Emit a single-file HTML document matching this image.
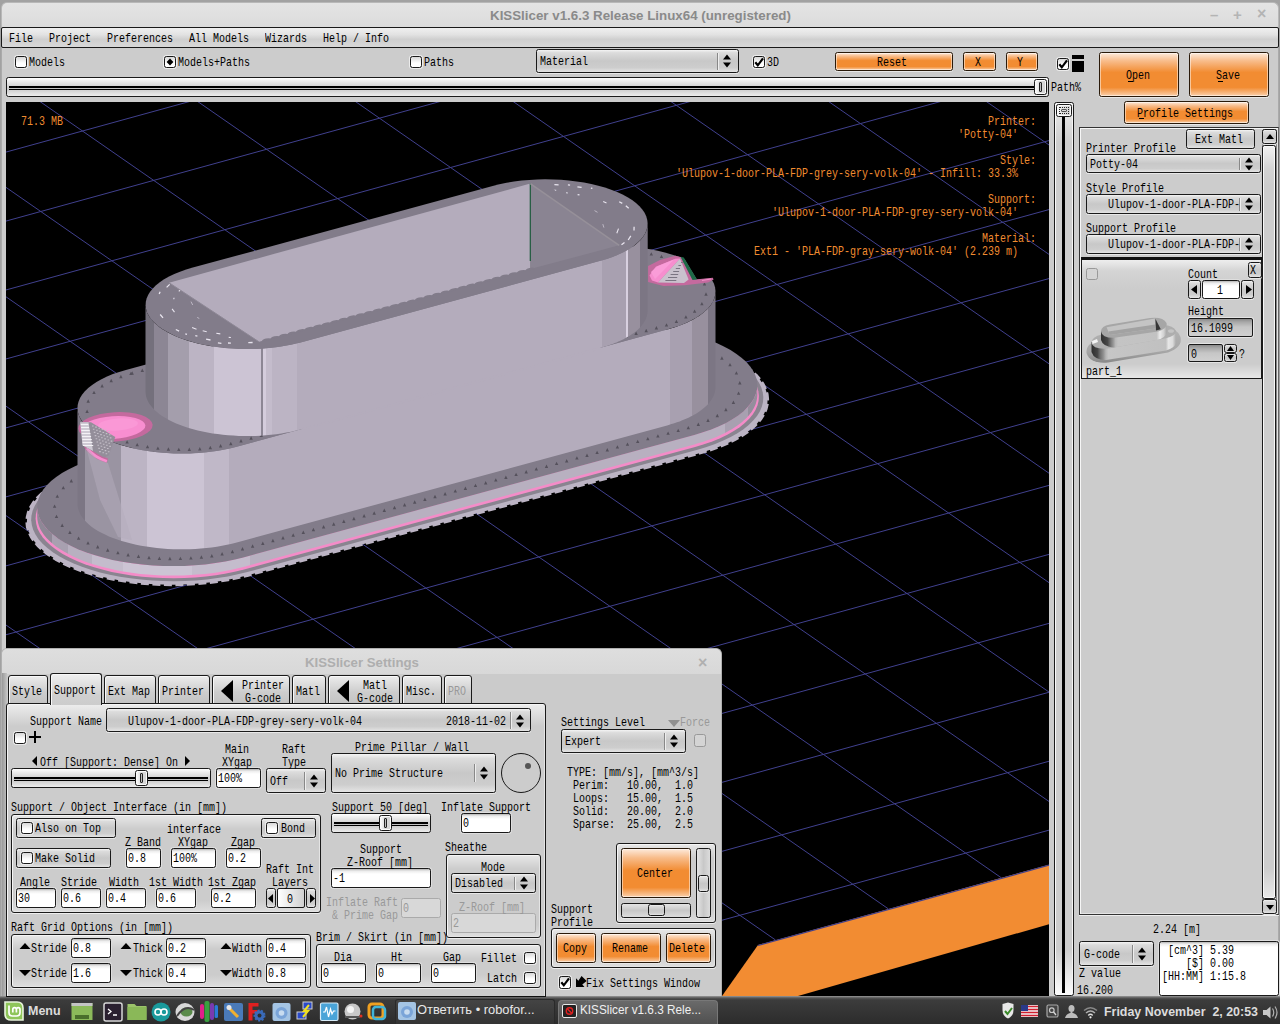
<!DOCTYPE html>
<html><head><meta charset="utf-8"><title>KISSlicer</title>
<style>
html,body{margin:0;padding:0;background:#000;overflow:hidden;}
#root{position:relative;width:1280px;height:1024px;overflow:hidden;background:#000;font-family:"Liberation Mono","DejaVu Sans Mono",monospace;}
#root div,#root span,#root svg.a,#root i{position:absolute;box-sizing:border-box;}
.t{z-index:5;font:13px/13px "Liberation Mono","DejaVu Sans Mono",monospace;white-space:pre;transform:scaleX(0.769);transform-origin:0 0;color:#000;}
.win{background:#ccc;}
.in{background:linear-gradient(#b4b4b4 0,#ececec 2px,#fff 5px);border:1px solid #1a1a1a;border-radius:2.5px;box-shadow:0 0 0 1px #dedede;}
.in.dis{background:#d8d8d8;border-color:#aaa;box-shadow:none;}
.b{border:1px solid #1a1a1a;border-radius:2.5px;background:linear-gradient(#f4f4f4 0%,#dcdcdc 12%,#c8c8c8 50%,#cdcdcd 80%,#e4e4e4 100%);box-shadow:0 1px 0 #e8e8e8;}
.o{border:1px solid #2a1a0a;border-radius:2.5px;background:linear-gradient(#fdeadb 0%,#f8bd8c 18%,#f28c32 45%,#f28c32 80%,#fad0ac 100%);box-shadow:0 1px 0 #e8e8e8,inset 0 0 0 1px rgba(255,255,255,.5);}
.sep{width:1px;background:#888;box-shadow:1px 0 0 #eee;}
.cb{background:linear-gradient(#d8d8d8,#fff 60%);border:1px solid #1a1a1a;border-radius:2.5px;box-shadow:0 0 0 1px #ececec;}
.cb.dis{background:#d4d4d4;border-color:#999;box-shadow:none;}
.grp{border:1px solid #1a1a1a;border-radius:3px;background:linear-gradient(#e8e8e8 0,#cccccc 14px,#cccccc calc(100% - 12px),#dedede 100%);box-shadow:0 1px 0 #eee,inset 1px 1px 0 #f6f6f6,inset -1px -1px 0 #e4e4e4;}
.sl{border:1px solid #1a1a1a;border-radius:2.5px;background:linear-gradient(#fff 0,#f4f4f4 2px,#d2d2d2 9px,#cfcfcf 12px,#ececec 100%);}
.trk{height:4px;background:linear-gradient(#000 0,#000 2px,#c4c4c4 2px,#c4c4c4 3px,#000 3px,#000 4px);}
.hd{border:1px solid #1a1a1a;border-radius:2.5px;background:linear-gradient(90deg,#fff,#e0e0e0 40%,#d0d0d0);box-shadow:inset 0 0 0 1px #fafafa;}
.hd i{position:absolute;left:4px;top:2px;bottom:2px;width:3px;border:1px solid #222;border-radius:1px;display:block;background:#bbb}
.card{border:1px solid #1a1a1a;border-top:0;background:linear-gradient(#f0f0f0 0,#d4d4d4 12px,#cccccc 30px,#cccccc calc(100% - 14px),#e8e8e8 100%);}
.ro{border:1px solid #1a1a1a;border-radius:2px;background:linear-gradient(#8a8a8a 0,#a8a8a8 3px,#c6c6c6 8px,#d0d0d0 100%);box-shadow:0 0 0 1px #e4e4e4;}
.tab{border:1px solid #1a1a1a;border-radius:3px 3px 0 0;background:linear-gradient(#ececec,#cdcdcd 60%,#c4c4c4);box-shadow:inset 1px 1px 0 #f8f8f8;}

</style></head>
<body>
<div id="root">
<div style="left:0;top:0;width:1280px;height:1024px;background:#a2a2a2"></div>
<div style="left:1px;top:2px;width:1278px;height:30px;background:linear-gradient(#e4e4e4,#dadada);border-radius:6px 6px 0 0;border:1px solid #b8b8b8;border-bottom:0"></div>
<span style="left:490.0px;top:7.0px;font:bold 13.3px/18px 'Liberation Sans','DejaVu Sans',sans-serif;color:#8a8a8a;white-space:pre;transform:scaleX(1.0029);transform-origin:0 0;">KISSlicer v1.6.3 Release Linux64 (unregistered)</span>
<div style="left:1205px;top:6px;width:70px;height:20px;font:bold 15px/18px 'Liberation Sans',sans-serif;color:#b4b4b4;white-space:pre"><span style="left:5px;top:0">–</span><span style="left:28px;top:0">+</span><span style="left:52px;top:-1px;font-size:16px">×</span></div>
<div class="win" style="left:1px;top:27px;width:1278px;height:970px;border-left:1px solid #aaa;border-right:1px solid #aaa"></div>
<div style="left:1px;top:27px;width:1278px;height:21px;border:1px solid #1a1a1a;border-radius:2px;background:linear-gradient(#f0f0f0 0,#e2e2e2 35%,#cfcfcf 60%,#d8d8d8 100%)"></div>
<span class="t " style="left:8.5px;top:32px;">File</span>
<span class="t " style="left:48.5px;top:32px;">Project</span>
<span class="t " style="left:106.5px;top:32px;">Preferences</span>
<span class="t " style="left:188.5px;top:32px;">All Models</span>
<span class="t " style="left:264.5px;top:32px;">Wizards</span>
<span class="t " style="left:322.5px;top:32px;">Help / Info</span>
<div class="cb" style="left:15.0px;top:56.0px;width:12.0px;height:12.0px;"></div>
<span class="t " style="left:28.5px;top:56px;">Models</span>
<div class="cb" style="left:164px;top:56px;width:12px;height:12px"><div style="left:2px;top:2px;width:6px;height:6px;background:#000;transform:rotate(45deg) scale(.8)"></div></div>
<span class="t " style="left:177.5px;top:56px;">Models+Paths</span>
<div class="cb" style="left:410.0px;top:56.0px;width:12.0px;height:12.0px;"></div>
<span class="t " style="left:423.5px;top:56px;">Paths</span>
<div class="b" style="left:536.0px;top:49.0px;width:203.0px;height:24.0px;"></div>
<div class="sep" style="left:717.0px;top:52.5px;height:17px"></div>
<svg class="a" style="left:722px;top:53.25px" width="10" height="16" viewBox="0 0 10 16"><path d="M5 1.5 L9 6.5 L1 6.5Z M5 14.5 L9 9.5 L1 9.5Z" fill="#000"/></svg>
<span class="t " style="left:539.5px;top:55px;">Material</span>
<div class="cb" style="left:753.0px;top:56.0px;width:12.0px;height:12.0px;"><svg width="12" height="12" viewBox="0 0 12 12" style="position:absolute;left:-1px;top:-1px"><path d="M2.300 6.200 L4.800 9.300 L10 2.300" fill="none" stroke="#000" stroke-width="2.200"/></svg></div>
<span class="t " style="left:766.5px;top:56px;">3D</span>
<div class="o" style="left:835.0px;top:52.0px;width:118.0px;height:19.0px;"></div>
<span class="t " style="left:877.2px;top:56px;">Reset</span>
<div class="o" style="left:963.0px;top:52.0px;width:33.0px;height:19.0px;"></div>
<span class="t " style="left:974.8px;top:56px;">X</span>
<div class="o" style="left:1006.0px;top:52.0px;width:32.0px;height:19.0px;"></div>
<span class="t " style="left:1017.2px;top:56px;">Y</span>
<div class="cb" style="left:1057.0px;top:58.0px;width:12.0px;height:12.0px;"><svg width="12" height="12" viewBox="0 0 12 12" style="position:absolute;left:-1px;top:-1px"><path d="M2.300 6.200 L4.800 9.300 L10 2.300" fill="none" stroke="#000" stroke-width="2.200"/></svg></div>
<div style="left:1072px;top:55px;width:12px;height:17px;background:#000"></div><div style="left:1072px;top:58.600px;width:12px;height:2.400px;background:#ccc"></div>
<div class="o" style="left:1099.0px;top:52.0px;width:80.0px;height:45.0px;"></div>
<span class="t " style="left:1125.5px;top:69px;">Open</span>
<div class="o" style="left:1189.0px;top:52.0px;width:80.0px;height:45.0px;"></div>
<span class="t " style="left:1215.5px;top:69px;">Save</span>
<div style="left:1127.5px;top:80.5px;width:5px;height:1px;background:#000"></div><div style="left:1217.5px;top:80.5px;width:5px;height:1px;background:#000"></div>
<div class="o" style="left:1124.0px;top:101.0px;width:125.0px;height:23.0px;"></div>
<span class="t " style="left:1137.0px;top:107px;">Profile Settings</span>
<div style="left:1138.5px;top:118px;width:5px;height:1px;background:#000"></div>
<div class="sl" style="left:6.0px;top:77.0px;width:1043.0px;height:20.0px;"></div>
<div class="trk" style="left:9px;top:86px;width:1037px"></div>
<div class="hd" style="left:1034px;top:79px;width:13px;height:16px"><i></i></div>
<span class="t " style="left:1050.5px;top:81px;">Path%</span>
<svg class="a" style="left:6px;top:102px" width="1043" height="894" viewBox="6 102 1043 894">
<rect x="6" y="102" width="1043" height="894" fill="#000"/>
<path d="M-1414.6 405.5L1520.8 -403.1M-1343.5 454.8L1592.0 -353.8M-1272.3 504.2L1663.1 -304.4M-1201.2 553.6L1734.3 -255.0M-1130.0 602.9L1805.4 -205.7M-1058.9 652.3L1876.6 -156.3M-987.7 701.6L1947.7 -107.0M-916.6 751.0L2018.9 -57.6M-845.4 800.4L2090.0 -8.2M-774.3 849.7L2161.2 41.1M-703.1 899.1L2232.3 90.5M-632.0 948.4L2303.5 139.8M-560.8 997.8L2374.6 189.2M-489.7 1047.2L2445.8 238.6M-418.5 1096.5L2516.9 287.9M-347.4 1145.9L2588.1 337.3M-276.2 1195.2L2659.2 386.6M-1444.0 275.7L-127.7 1188.8M-1331.1 244.6L-14.8 1157.7M-1218.2 213.5L98.1 1126.6M-1105.3 182.4L211.0 1095.5M-992.4 151.3L323.9 1064.4M-879.5 120.2L436.8 1033.3M-766.6 89.1L549.7 1002.2M-653.7 58.0L662.6 971.1M-540.8 26.9L775.5 940.0M-427.9 -4.2L888.4 908.9M-315.0 -35.3L1001.3 877.8M-202.1 -66.4L1114.2 846.7M-89.2 -97.5L1227.1 815.6M23.7 -128.6L1340.0 784.5M136.6 -159.7L1452.9 753.4M249.5 -190.8L1565.8 722.3M362.4 -221.9L1678.7 691.2M475.3 -253.0L1791.6 660.1M588.2 -284.1L1904.5 629.0M701.1 -315.2L2017.4 597.9M814.0 -346.3L2130.3 566.8M926.9 -377.4L2243.2 535.7M1039.8 -408.5L2356.1 504.6M1152.7 -439.6L2469.0 473.5" stroke="#40408e" stroke-width="1" fill="none"/>
<polygon points="758,945 1049,864.7 1049,924.2 798,996 722,996" fill="#f28c32"/>
<path d="M758 945.5L1049 865.2" stroke="#40408e" stroke-width="1.2"/>
<defs>
<linearGradient id="g1" gradientUnits="userSpaceOnUse" x1="36" y1="0" x2="766" y2="0"><stop offset="0.0000" stop-color="#8e8896"/><stop offset="0.0219" stop-color="#8e8896"/><stop offset="0.0219" stop-color="#a8a0b0"/><stop offset="0.0438" stop-color="#a8a0b0"/><stop offset="0.0438" stop-color="#b8b0c0"/><stop offset="0.0767" stop-color="#b8b0c0"/><stop offset="0.0767" stop-color="#c4bccc"/><stop offset="0.1192" stop-color="#c4bccc"/><stop offset="0.1192" stop-color="#ccc4d4"/><stop offset="0.2137" stop-color="#ccc4d4"/><stop offset="0.2137" stop-color="#c4bccc"/><stop offset="0.2932" stop-color="#c4bccc"/><stop offset="0.2932" stop-color="#b8b0c0"/><stop offset="0.8959" stop-color="#b8b0c0"/><stop offset="0.8959" stop-color="#b8b0c0"/><stop offset="0.9438" stop-color="#b8b0c0"/><stop offset="0.9438" stop-color="#a8a0b0"/><stop offset="0.9753" stop-color="#a8a0b0"/><stop offset="0.9753" stop-color="#948e9c"/><stop offset="1.0000" stop-color="#948e9c"/></linearGradient>
<linearGradient id="g2" gradientUnits="userSpaceOnUse" x1="77" y1="0" x2="716" y2="0"><stop offset="0.0000" stop-color="#7c7684"/><stop offset="0.0125" stop-color="#7c7684"/><stop offset="0.0125" stop-color="#9a94a2"/><stop offset="0.0689" stop-color="#9a94a2"/><stop offset="0.0689" stop-color="#bcb4c4"/><stop offset="0.1088" stop-color="#bcb4c4"/><stop offset="0.1088" stop-color="#ccc4d4"/><stop offset="0.1994" stop-color="#ccc4d4"/><stop offset="0.1994" stop-color="#c0b8c8"/><stop offset="0.2385" stop-color="#c0b8c8"/><stop offset="0.2385" stop-color="#b4acbc"/><stop offset="0.9280" stop-color="#b4acbc"/><stop offset="0.9280" stop-color="#b4acbc"/><stop offset="0.9280" stop-color="#b4acbc"/><stop offset="0.9280" stop-color="#a8a0b0"/><stop offset="0.9632" stop-color="#a8a0b0"/><stop offset="0.9632" stop-color="#98909e"/><stop offset="0.9875" stop-color="#98909e"/><stop offset="0.9875" stop-color="#7c7684"/><stop offset="1.0000" stop-color="#7c7684"/></linearGradient>
<linearGradient id="g3" gradientUnits="userSpaceOnUse" x1="145" y1="0" x2="648" y2="0"><stop offset="0.0000" stop-color="#74707c"/><stop offset="0.0171" stop-color="#74707c"/><stop offset="0.0171" stop-color="#8c8694"/><stop offset="0.0451" stop-color="#8c8694"/><stop offset="0.0451" stop-color="#a49eac"/><stop offset="0.0869" stop-color="#a49eac"/><stop offset="0.0869" stop-color="#bcb4c4"/><stop offset="0.1366" stop-color="#bcb4c4"/><stop offset="0.1366" stop-color="#ccc4d4"/><stop offset="0.2316" stop-color="#ccc4d4"/><stop offset="0.2316" stop-color="#8c8694"/><stop offset="0.2346" stop-color="#8c8694"/><stop offset="0.2346" stop-color="#d4ccdc"/><stop offset="0.2406" stop-color="#d4ccdc"/><stop offset="0.2406" stop-color="#c4bccc"/><stop offset="0.2531" stop-color="#c4bccc"/><stop offset="0.2531" stop-color="#bcb4c4"/><stop offset="0.3028" stop-color="#bcb4c4"/><stop offset="0.3028" stop-color="#b4acbc"/><stop offset="0.9095" stop-color="#b4acbc"/><stop offset="0.9095" stop-color="#a8a0b0"/><stop offset="0.9569" stop-color="#a8a0b0"/><stop offset="0.9569" stop-color="#d8d0e0"/><stop offset="0.9606" stop-color="#d8d0e0"/><stop offset="0.9606" stop-color="#98909e"/><stop offset="0.9841" stop-color="#98909e"/><stop offset="0.9841" stop-color="#7c7684"/><stop offset="1.0000" stop-color="#7c7684"/></linearGradient>
</defs>
<polygon points="94.2,468.4 84.9,471.2 76.1,474.3 67.9,477.6 60.3,481.3 53.4,485.2 47.2,489.3 41.8,493.6 37.2,498.1 33.4,502.8 30.4,507.5 28.4,512.4 27.2,517.3 26.9,522.2 27.4,527.1 28.9,532.0 31.3,536.9 34.5,541.6 38.5,546.2 43.4,550.7 49.1,555.0 55.5,559.1 62.6,563.0 70.4,566.6 78.8,569.9 87.8,572.9 97.3,575.6 107.3,578.0 117.6,580.0 128.3,581.7 139.3,583.0 150.4,584.0 161.7,584.5 173.0,584.7 184.3,584.4 195.6,583.8 206.7,582.8 217.5,581.5 228.1,579.7 238.3,577.6 248.2,575.2 700.3,452.9 709.6,450.1 718.4,447.0 726.6,443.7 734.2,440.0 741.1,436.1 747.3,432.0 752.7,427.7 757.3,423.2 761.1,418.5 764.1,413.8 766.1,408.9 767.3,404.0 767.6,399.1 767.1,394.2 765.6,389.3 763.2,384.4 760.0,379.7 756.0,375.1 751.1,370.6 745.4,366.3 739.0,362.2 731.9,358.3 724.1,354.7 715.7,351.4 706.7,348.4 697.2,345.7 687.2,343.3 676.9,341.3 666.2,339.6 655.2,338.3 644.1,337.3 632.8,336.8 621.5,336.6 610.2,336.9 598.9,337.5 587.8,338.5 577.0,339.8 566.4,341.6 556.2,343.7 546.3,346.1" fill="#bcb4c4" stroke="#bcb4c4" stroke-width="3" stroke-dasharray="8 3.5" stroke-linejoin="round"/>
<polygon points="97.0,467.6 87.9,470.3 79.3,473.4 71.2,476.7 63.8,480.2 57.1,484.0 51.0,488.1 45.8,492.3 41.3,496.7 37.5,501.2 34.7,505.9 32.7,510.6 31.5,515.4 31.2,520.2 31.8,525.0 33.2,529.8 35.5,534.5 38.6,539.2 42.6,543.7 47.4,548.0 52.9,552.2 59.2,556.2 66.1,560.0 73.7,563.5 82.0,566.8 90.8,569.7 100.0,572.4 109.8,574.7 119.9,576.7 130.3,578.3 141.0,579.6 151.9,580.5 162.9,581.1 174.0,581.2 185.0,581.0 196.0,580.4 206.8,579.4 217.5,578.1 227.8,576.4 237.8,574.3 247.4,572.0 697.5,449.7 706.6,447.0 715.2,443.9 723.3,440.6 730.7,437.1 737.4,433.3 743.5,429.2 748.7,425.0 753.2,420.6 757.0,416.1 759.8,411.4 761.8,406.7 763.0,401.9 763.3,397.1 762.7,392.3 761.3,387.5 759.0,382.8 755.9,378.1 751.9,373.6 747.1,369.3 741.6,365.1 735.3,361.1 728.4,357.3 720.8,353.8 712.5,350.5 703.7,347.6 694.5,344.9 684.7,342.6 674.6,340.6 664.2,339.0 653.5,337.7 642.6,336.8 631.6,336.2 620.5,336.1 609.5,336.3 598.5,336.9 587.7,337.9 577.0,339.2 566.7,340.9 556.7,343.0 547.1,345.3" fill="#8a8490" />
<polygon points="99.4,468.2 90.5,470.8 82.2,473.7 74.4,476.9 67.2,480.4 60.7,484.0 54.8,487.9 49.7,492.0 45.3,496.3 41.8,500.7 39.0,505.2 37.0,509.8 35.9,514.4 35.6,519.1 36.2,523.8 37.5,528.4 39.8,533.0 42.8,537.5 46.7,541.8 51.3,546.1 56.6,550.1 62.7,554.0 69.4,557.6 76.8,561.1 84.8,564.2 93.3,567.1 102.3,569.6 111.7,571.9 121.5,573.8 131.6,575.4 142.0,576.7 152.5,577.5 163.2,578.1 173.9,578.2 184.6,578.0 195.3,577.4 205.8,576.5 216.0,575.2 226.1,573.5 235.7,571.5 245.0,569.2 695.1,446.9 704.0,444.3 712.3,441.4 720.1,438.2 727.3,434.7 733.8,431.1 739.7,427.2 744.8,423.1 749.2,418.8 752.7,414.4 755.5,409.9 757.5,405.3 758.6,400.7 758.9,396.0 758.3,391.3 757.0,386.7 754.7,382.1 751.7,377.6 747.8,373.3 743.2,369.0 737.9,365.0 731.8,361.1 725.1,357.5 717.7,354.0 709.7,350.9 701.2,348.0 692.2,345.5 682.8,343.2 673.0,341.3 662.9,339.7 652.5,338.4 642.0,337.6 631.3,337.0 620.6,336.9 609.9,337.1 599.2,337.7 588.7,338.6 578.5,339.9 568.4,341.6 558.8,343.6 549.5,345.9" fill="#f48cc8" />
<polygon points="37.2,507.0 37.4,510.1 38.0,513.2 38.9,516.3 40.2,519.4 42.0,522.5 44.0,525.5 46.5,528.4 49.3,531.3 52.4,534.1 55.9,536.9 59.8,539.6 63.9,542.1 68.4,544.6 73.1,547.0 78.1,549.2 83.4,551.4 89.0,553.4 94.8,555.3 100.8,557.0 107.0,558.6 113.4,560.1 119.9,561.4 126.6,562.5 133.5,563.5 140.4,564.4 147.5,565.0 154.6,565.6 161.7,565.9 168.9,566.1 176.1,566.1 183.3,565.9 190.5,565.6 197.6,565.1 204.6,564.5 211.5,563.7 218.4,562.7 225.1,561.5 231.6,560.3 238.0,558.8 244.2,557.2 694.3,434.9 697.1,434.1 699.9,433.3 702.7,432.4 705.4,431.6 708.1,430.6 710.7,429.7 713.2,428.7 715.7,427.7 718.1,426.7 720.5,425.6 722.8,424.5 725.0,423.4 727.2,422.3 729.3,421.1 731.4,419.9 733.3,418.7 735.2,417.5 737.1,416.3 738.8,415.0 740.5,413.7 742.1,412.4 743.6,411.1 745.1,409.8 746.5,408.4 747.8,407.0 749.0,405.7 750.1,404.3 751.2,402.9 752.2,401.4 753.0,400.0 753.9,398.6 754.6,397.1 755.2,395.7 755.8,394.2 756.2,392.7 756.6,391.3 756.9,389.8 757.1,388.3 757.3,386.8 757.3,385.3 757.3,394.8 757.3,396.3 757.1,397.8 756.9,399.3 756.6,400.8 756.2,402.2 755.8,403.7 755.2,405.2 754.6,406.6 753.9,408.1 753.0,409.5 752.2,410.9 751.2,412.4 750.1,413.8 749.0,415.2 747.8,416.5 746.5,417.9 745.1,419.3 743.6,420.6 742.1,421.9 740.5,423.2 738.8,424.5 737.1,425.8 735.2,427.0 733.3,428.2 731.4,429.4 729.3,430.6 727.2,431.8 725.0,432.9 722.8,434.0 720.5,435.1 718.1,436.2 715.7,437.2 713.2,438.2 710.7,439.2 708.1,440.1 705.4,441.1 702.7,441.9 699.9,442.8 697.1,443.6 694.3,444.4 244.2,566.7 238.0,568.3 231.6,569.8 225.1,571.0 218.4,572.2 211.5,573.2 204.6,574.0 197.6,574.6 190.5,575.1 183.3,575.4 176.1,575.6 168.9,575.6 161.7,575.4 154.6,575.1 147.5,574.5 140.4,573.9 133.5,573.0 126.6,572.0 119.9,570.9 113.4,569.6 107.0,568.1 100.8,566.5 94.8,564.8 89.0,562.9 83.4,560.9 78.1,558.7 73.1,556.5 68.4,554.1 63.9,551.6 59.8,549.1 55.9,546.4 52.4,543.6 49.3,540.8 46.5,537.9 44.0,535.0 42.0,532.0 40.2,528.9 38.9,525.8 38.0,522.7 37.4,519.6 37.2,516.5" fill="url(#g1)" />
<polygon points="100.2,457.4 91.5,460.0 83.2,462.8 75.5,466.0 68.4,469.4 62.0,473.0 56.2,476.9 51.1,480.9 46.8,485.2 43.3,489.5 40.5,494.0 38.6,498.5 37.5,503.1 37.2,507.7 37.7,512.3 39.1,516.9 41.3,521.4 44.3,525.8 48.1,530.2 52.7,534.3 58.0,538.4 64.0,542.2 70.6,545.8 77.9,549.2 85.8,552.3 94.2,555.1 103.1,557.6 112.4,559.9 122.1,561.8 132.1,563.3 142.3,564.6 152.8,565.4 163.3,566.0 173.9,566.1 184.5,565.9 195.0,565.3 205.4,564.4 215.5,563.1 225.4,561.5 235.0,559.5 244.2,557.2 694.3,434.9 703.0,432.3 711.3,429.5 719.0,426.3 726.1,422.9 732.5,419.3 738.3,415.4 743.4,411.4 747.7,407.1 751.2,402.8 754.0,398.3 755.9,393.8 757.0,389.2 757.3,384.6 756.8,380.0 755.4,375.4 753.2,370.9 750.2,366.5 746.4,362.1 741.8,358.0 736.5,353.9 730.5,350.1 723.9,346.5 716.6,343.1 708.7,340.0 700.3,337.2 691.4,334.7 682.1,332.4 672.4,330.5 662.4,329.0 652.2,327.7 641.7,326.9 631.2,326.3 620.6,326.2 610.0,326.4 599.5,327.0 589.1,327.9 579.0,329.2 569.1,330.8 559.5,332.8 550.3,335.1" fill="#827c8a" />
<path d="M109.5 462.1l1.7 3.4h-3.4zM99.4 465.2l1.7 3.4h-3.4zM89.6 468.9l1.7 3.4h-3.4zM80.2 473.4l1.7 3.4h-3.4zM71.3 479.0l1.7 3.4h-3.4zM63.3 485.9l1.7 3.4h-3.4zM57.3 494.4l1.7 3.4h-3.4zM54.6 504.4l1.7 3.4h-3.4zM56.5 514.7l1.7 3.4h-3.4zM62.2 523.5l1.7 3.4h-3.4zM69.9 530.6l1.7 3.4h-3.4zM78.6 536.4l1.7 3.4h-3.4zM88.0 541.2l1.7 3.4h-3.4zM97.7 545.1l1.7 3.4h-3.4zM107.7 548.3l1.7 3.4h-3.4zM117.9 550.9l1.7 3.4h-3.4zM128.1 553.0l1.7 3.4h-3.4zM138.5 554.6l1.7 3.4h-3.4zM149.0 555.8l1.7 3.4h-3.4zM159.4 556.5l1.7 3.4h-3.4zM169.9 556.8l1.7 3.4h-3.4zM180.4 556.7l1.7 3.4h-3.4zM190.9 556.2l1.7 3.4h-3.4zM201.4 555.3l1.7 3.4h-3.4zM211.8 554.0l1.7 3.4h-3.4zM222.1 552.1l1.7 3.4h-3.4zM232.4 549.8l1.7 3.4h-3.4zM242.5 547.1l1.7 3.4h-3.4zM252.6 544.3l1.7 3.4h-3.4zM262.8 541.6l1.7 3.4h-3.4zM272.9 538.8l1.7 3.4h-3.4zM283.0 536.1l1.7 3.4h-3.4zM293.2 533.3l1.7 3.4h-3.4zM303.3 530.5l1.7 3.4h-3.4zM313.4 527.8l1.7 3.4h-3.4zM323.6 525.0l1.7 3.4h-3.4zM333.7 522.3l1.7 3.4h-3.4zM343.8 519.5l1.7 3.4h-3.4zM353.9 516.8l1.7 3.4h-3.4zM364.1 514.0l1.7 3.4h-3.4zM374.2 511.3l1.7 3.4h-3.4zM384.3 508.5l1.7 3.4h-3.4zM394.5 505.8l1.7 3.4h-3.4zM404.6 503.0l1.7 3.4h-3.4zM414.7 500.3l1.7 3.4h-3.4zM424.9 497.5l1.7 3.4h-3.4zM435.0 494.8l1.7 3.4h-3.4zM445.1 492.0l1.7 3.4h-3.4zM455.3 489.2l1.7 3.4h-3.4zM465.4 486.5l1.7 3.4h-3.4zM475.5 483.7l1.7 3.4h-3.4zM485.7 481.0l1.7 3.4h-3.4zM495.8 478.2l1.7 3.4h-3.4zM505.9 475.5l1.7 3.4h-3.4zM516.1 472.7l1.7 3.4h-3.4zM526.2 470.0l1.7 3.4h-3.4zM536.3 467.2l1.7 3.4h-3.4zM546.5 464.5l1.7 3.4h-3.4zM556.6 461.7l1.7 3.4h-3.4zM566.7 459.0l1.7 3.4h-3.4zM576.9 456.2l1.7 3.4h-3.4zM587.0 453.5l1.7 3.4h-3.4zM597.1 450.7l1.7 3.4h-3.4zM607.3 448.0l1.7 3.4h-3.4zM617.4 445.2l1.7 3.4h-3.4zM627.5 442.4l1.7 3.4h-3.4zM637.7 439.7l1.7 3.4h-3.4zM647.8 436.9l1.7 3.4h-3.4zM657.9 434.2l1.7 3.4h-3.4zM668.1 431.4l1.7 3.4h-3.4zM678.2 428.7l1.7 3.4h-3.4zM688.3 425.9l1.7 3.4h-3.4zM698.3 422.6l1.7 3.4h-3.4zM708.0 418.6l1.7 3.4h-3.4zM717.3 413.8l1.7 3.4h-3.4zM725.9 407.8l1.7 3.4h-3.4zM733.4 400.5l1.7 3.4h-3.4zM738.6 391.4l1.7 3.4h-3.4zM739.8 381.0l1.7 3.4h-3.4zM736.4 371.2l1.7 3.4h-3.4zM730.0 362.9l1.7 3.4h-3.4zM721.9 356.3l1.7 3.4h-3.4zM712.9 350.9l1.7 3.4h-3.4zM703.4 346.4l1.7 3.4h-3.4zM693.6 342.7l1.7 3.4h-3.4zM683.5 339.7l1.7 3.4h-3.4zM673.3 337.3l1.7 3.4h-3.4zM663.0 335.3l1.7 3.4h-3.4zM652.6 333.9l1.7 3.4h-3.4zM642.1 332.8l1.7 3.4h-3.4zM631.7 332.2l1.7 3.4h-3.4zM621.2 332.1l1.7 3.4h-3.4zM610.7 332.3l1.7 3.4h-3.4zM600.2 332.9l1.7 3.4h-3.4zM589.7 334.0l1.7 3.4h-3.4zM579.4 335.5l1.7 3.4h-3.4zM569.0 337.5l1.7 3.4h-3.4zM558.8 340.0l1.7 3.4h-3.4zM548.7 342.7l1.7 3.4h-3.4zM538.6 345.5l1.7 3.4h-3.4zM528.5 348.2l1.7 3.4h-3.4zM518.3 351.0l1.7 3.4h-3.4zM508.2 353.7l1.7 3.4h-3.4zM498.1 356.5l1.7 3.4h-3.4zM487.9 359.2l1.7 3.4h-3.4zM477.8 362.0l1.7 3.4h-3.4zM467.7 364.8l1.7 3.4h-3.4zM457.5 367.5l1.7 3.4h-3.4zM447.4 370.3l1.7 3.4h-3.4zM437.3 373.0l1.7 3.4h-3.4zM427.1 375.8l1.7 3.4h-3.4zM417.0 378.5l1.7 3.4h-3.4zM406.9 381.3l1.7 3.4h-3.4zM396.7 384.0l1.7 3.4h-3.4zM386.6 386.8l1.7 3.4h-3.4zM376.5 389.5l1.7 3.4h-3.4zM366.3 392.3l1.7 3.4h-3.4zM356.2 395.0l1.7 3.4h-3.4zM346.1 397.8l1.7 3.4h-3.4zM335.9 400.5l1.7 3.4h-3.4zM325.8 403.3l1.7 3.4h-3.4zM315.7 406.1l1.7 3.4h-3.4zM305.5 408.8l1.7 3.4h-3.4zM295.4 411.6l1.7 3.4h-3.4zM285.3 414.3l1.7 3.4h-3.4zM275.1 417.1l1.7 3.4h-3.4zM265.0 419.8l1.7 3.4h-3.4zM254.9 422.6l1.7 3.4h-3.4zM244.7 425.3l1.7 3.4h-3.4zM234.6 428.1l1.7 3.4h-3.4zM224.5 430.8l1.7 3.4h-3.4zM214.3 433.6l1.7 3.4h-3.4zM204.2 436.3l1.7 3.4h-3.4zM194.1 439.1l1.7 3.4h-3.4zM183.9 441.8l1.7 3.4h-3.4zM173.8 444.6l1.7 3.4h-3.4zM163.7 447.3l1.7 3.4h-3.4zM153.5 450.1l1.7 3.4h-3.4zM143.4 452.9l1.7 3.4h-3.4zM133.3 455.6l1.7 3.4h-3.4zM123.1 458.4l1.7 3.4h-3.4zM113.0 461.1l1.7 3.4h-3.4z" fill="#55515c"/>
<polygon points="77.5,408.0 77.6,410.4 78.1,412.8 78.8,415.2 79.8,417.6 81.1,420.0 82.7,422.3 84.6,424.5 86.8,426.8 89.2,428.9 91.9,431.1 94.8,433.1 98.0,435.1 101.4,437.0 105.1,438.8 109.0,440.6 113.0,442.2 117.3,443.7 121.7,445.2 126.4,446.5 131.1,447.8 136.1,448.9 141.1,449.9 146.3,450.8 151.5,451.5 156.9,452.2 162.3,452.7 167.7,453.1 173.3,453.4 178.8,453.5 184.3,453.5 189.8,453.4 195.3,453.1 200.8,452.8 206.2,452.3 211.6,451.6 216.8,450.9 222.0,450.0 227.0,449.0 231.9,447.9 236.7,446.7 667.1,329.6 669.3,329.0 671.4,328.3 673.5,327.7 675.6,327.0 677.7,326.3 679.7,325.6 681.6,324.8 683.5,324.0 685.4,323.2 687.2,322.4 689.0,321.6 690.7,320.7 692.4,319.9 694.0,319.0 695.6,318.1 697.1,317.1 698.6,316.2 700.0,315.2 701.3,314.3 702.6,313.3 703.8,312.3 705.0,311.3 706.1,310.2 707.2,309.2 708.2,308.1 709.1,307.1 710.0,306.0 710.8,304.9 711.6,303.8 712.2,302.7 712.9,301.6 713.4,300.5 713.9,299.4 714.3,298.3 714.7,297.2 715.0,296.0 715.2,294.9 715.4,293.7 715.5,292.6 715.5,291.5 715.5,387.3 715.5,388.4 715.4,389.5 715.2,390.7 715.0,391.8 714.7,393.0 714.3,394.1 713.9,395.2 713.4,396.3 712.9,397.4 712.2,398.5 711.6,399.6 710.8,400.7 710.0,401.8 709.1,402.9 708.2,403.9 707.2,405.0 706.1,406.0 705.0,407.1 703.8,408.1 702.6,409.1 701.3,410.1 700.0,411.0 698.6,412.0 697.1,412.9 695.6,413.9 694.0,414.8 692.4,415.7 690.7,416.5 689.0,417.4 687.2,418.2 685.4,419.0 683.5,419.8 681.6,420.6 679.7,421.4 677.7,422.1 675.6,422.8 673.5,423.5 671.4,424.1 669.3,424.8 667.1,425.4 236.7,542.5 231.9,543.7 227.0,544.8 222.0,545.8 216.8,546.7 211.6,547.4 206.2,548.1 200.8,548.6 195.3,548.9 189.8,549.2 184.3,549.3 178.8,549.3 173.3,549.2 167.7,548.9 162.3,548.5 156.9,548.0 151.5,547.3 146.3,546.6 141.1,545.7 136.1,544.7 131.1,543.6 126.4,542.3 121.7,541.0 117.3,539.5 113.0,538.0 109.0,536.4 105.1,534.6 101.4,532.8 98.0,530.9 94.8,528.9 91.9,526.9 89.2,524.7 86.8,522.6 84.6,520.3 82.7,518.1 81.1,515.8 79.8,513.4 78.8,511.0 78.1,508.6 77.6,506.2 77.5,503.8" fill="url(#g2)" />
<polygon points="125.9,369.9 119.2,371.9 112.9,374.1 107.0,376.5 101.5,379.2 96.5,382.0 92.1,384.9 88.2,388.0 84.9,391.3 82.2,394.6 80.0,398.0 78.6,401.5 77.7,405.1 77.5,408.6 77.9,412.1 79.0,415.7 80.7,419.1 83.0,422.6 85.9,425.9 89.4,429.1 93.5,432.2 98.1,435.1 103.2,437.9 108.8,440.5 114.9,442.9 121.3,445.1 128.2,447.0 135.3,448.7 142.8,450.2 150.5,451.4 158.3,452.3 166.3,453.0 174.5,453.4 182.6,453.5 190.7,453.4 198.8,452.9 206.8,452.2 214.6,451.2 222.2,450.0 229.6,448.5 236.7,446.7 667.1,329.6 673.8,327.6 680.1,325.4 686.0,323.0 691.5,320.3 696.5,317.5 700.9,314.6 704.8,311.5 708.1,308.2 710.8,304.9 713.0,301.5 714.4,298.0 715.3,294.4 715.5,290.9 715.1,287.4 714.0,283.8 712.3,280.4 710.0,276.9 707.1,273.6 703.6,270.4 699.5,267.3 694.9,264.4 689.8,261.6 684.2,259.0 678.1,256.6 671.7,254.4 664.8,252.5 657.7,250.8 650.2,249.3 642.5,248.1 634.7,247.2 626.7,246.5 618.5,246.1 610.4,246.0 602.3,246.1 594.2,246.6 586.2,247.3 578.4,248.3 570.8,249.5 563.4,251.0 556.3,252.8" fill="#827c8a" />
<path d="M130.9 371.7l1.7 3.4h-3.4zM120.9 374.8l1.7 3.4h-3.4zM111.2 378.8l1.7 3.4h-3.4zM102.1 384.0l1.7 3.4h-3.4zM94.0 390.7l1.7 3.4h-3.4zM88.2 399.3l1.7 3.4h-3.4zM87.1 409.6l1.7 3.4h-3.4zM91.5 419.1l1.7 3.4h-3.4zM98.9 426.5l1.7 3.4h-3.4zM107.7 432.2l1.7 3.4h-3.4zM117.2 436.6l1.7 3.4h-3.4zM127.1 440.2l1.7 3.4h-3.4zM137.2 442.9l1.7 3.4h-3.4zM147.5 444.9l1.7 3.4h-3.4zM157.9 446.4l1.7 3.4h-3.4zM168.4 447.3l1.7 3.4h-3.4zM178.8 447.7l1.7 3.4h-3.4zM189.3 447.6l1.7 3.4h-3.4zM199.8 447.0l1.7 3.4h-3.4zM210.3 445.8l1.7 3.4h-3.4zM220.6 444.1l1.7 3.4h-3.4zM230.8 441.8l1.7 3.4h-3.4zM241.0 439.0l1.7 3.4h-3.4zM251.1 436.3l1.7 3.4h-3.4zM261.2 433.5l1.7 3.4h-3.4zM271.4 430.7l1.7 3.4h-3.4zM281.5 428.0l1.7 3.4h-3.4zM291.6 425.2l1.7 3.4h-3.4zM301.8 422.5l1.7 3.4h-3.4zM311.9 419.7l1.7 3.4h-3.4zM322.0 417.0l1.7 3.4h-3.4zM332.2 414.2l1.7 3.4h-3.4zM342.3 411.5l1.7 3.4h-3.4zM352.4 408.7l1.7 3.4h-3.4zM362.6 405.9l1.7 3.4h-3.4zM372.7 403.2l1.7 3.4h-3.4zM382.8 400.4l1.7 3.4h-3.4zM393.0 397.7l1.7 3.4h-3.4zM403.1 394.9l1.7 3.4h-3.4zM413.2 392.2l1.7 3.4h-3.4zM423.3 389.4l1.7 3.4h-3.4zM433.5 386.6l1.7 3.4h-3.4zM443.6 383.9l1.7 3.4h-3.4zM453.7 381.1l1.7 3.4h-3.4zM463.9 378.4l1.7 3.4h-3.4zM474.0 375.6l1.7 3.4h-3.4zM484.1 372.9l1.7 3.4h-3.4zM494.3 370.1l1.7 3.4h-3.4zM504.4 367.3l1.7 3.4h-3.4zM514.5 364.6l1.7 3.4h-3.4zM524.7 361.8l1.7 3.4h-3.4zM534.8 359.1l1.7 3.4h-3.4zM544.9 356.3l1.7 3.4h-3.4zM555.1 353.6l1.7 3.4h-3.4zM565.2 350.8l1.7 3.4h-3.4zM575.3 348.0l1.7 3.4h-3.4zM585.5 345.3l1.7 3.4h-3.4zM595.6 342.5l1.7 3.4h-3.4zM605.7 339.8l1.7 3.4h-3.4zM615.8 337.0l1.7 3.4h-3.4zM626.0 334.3l1.7 3.4h-3.4zM636.1 331.5l1.7 3.4h-3.4zM646.2 328.8l1.7 3.4h-3.4zM656.4 326.0l1.7 3.4h-3.4zM666.5 323.2l1.7 3.4h-3.4zM676.4 319.7l1.7 3.4h-3.4zM685.9 315.2l1.7 3.4h-3.4zM694.6 309.4l1.7 3.4h-3.4zM701.9 301.9l1.7 3.4h-3.4zM706.0 292.3l1.7 3.4h-3.4zM704.5 282.1l1.7 3.4h-3.4zM698.6 273.5l1.7 3.4h-3.4zM690.4 266.9l1.7 3.4h-3.4zM681.2 261.8l1.7 3.4h-3.4zM671.5 257.8l1.7 3.4h-3.4zM661.5 254.7l1.7 3.4h-3.4zM651.3 252.2l1.7 3.4h-3.4zM641.0 250.5l1.7 3.4h-3.4zM630.5 249.2l1.7 3.4h-3.4zM620.1 248.5l1.7 3.4h-3.4zM609.6 248.4l1.7 3.4h-3.4zM599.1 248.7l1.7 3.4h-3.4zM588.6 249.5l1.7 3.4h-3.4zM578.2 250.9l1.7 3.4h-3.4zM567.9 252.9l1.7 3.4h-3.4zM557.7 255.5l1.7 3.4h-3.4zM547.6 258.3l1.7 3.4h-3.4zM537.5 261.0l1.7 3.4h-3.4zM527.3 263.8l1.7 3.4h-3.4zM517.2 266.6l1.7 3.4h-3.4zM507.1 269.3l1.7 3.4h-3.4zM496.9 272.1l1.7 3.4h-3.4zM486.8 274.8l1.7 3.4h-3.4zM476.7 277.6l1.7 3.4h-3.4zM466.5 280.3l1.7 3.4h-3.4zM456.4 283.1l1.7 3.4h-3.4zM446.3 285.9l1.7 3.4h-3.4zM436.1 288.6l1.7 3.4h-3.4zM426.0 291.4l1.7 3.4h-3.4zM415.9 294.1l1.7 3.4h-3.4zM405.7 296.9l1.7 3.4h-3.4zM395.6 299.6l1.7 3.4h-3.4zM385.5 302.4l1.7 3.4h-3.4zM375.4 305.2l1.7 3.4h-3.4zM365.2 307.9l1.7 3.4h-3.4zM355.1 310.7l1.7 3.4h-3.4zM345.0 313.4l1.7 3.4h-3.4zM334.8 316.2l1.7 3.4h-3.4zM324.7 318.9l1.7 3.4h-3.4zM314.6 321.7l1.7 3.4h-3.4zM304.4 324.4l1.7 3.4h-3.4zM294.3 327.2l1.7 3.4h-3.4zM284.2 330.0l1.7 3.4h-3.4zM274.0 332.7l1.7 3.4h-3.4zM263.9 335.5l1.7 3.4h-3.4zM253.8 338.2l1.7 3.4h-3.4zM243.6 341.0l1.7 3.4h-3.4zM233.5 343.7l1.7 3.4h-3.4zM223.4 346.5l1.7 3.4h-3.4zM213.2 349.3l1.7 3.4h-3.4zM203.1 352.0l1.7 3.4h-3.4zM193.0 354.8l1.7 3.4h-3.4zM182.8 357.5l1.7 3.4h-3.4zM172.7 360.3l1.7 3.4h-3.4zM162.6 363.0l1.7 3.4h-3.4zM152.5 365.8l1.7 3.4h-3.4zM142.3 368.6l1.7 3.4h-3.4zM132.2 371.3l1.7 3.4h-3.4z" fill="#55515c"/>
<polygon points="145.5,304.7 145.7,307.1 146.1,309.4 146.8,311.8 147.8,314.1 149.1,316.4 150.7,318.6 152.5,320.8 154.6,323.0 157.0,325.1 159.6,327.2 162.5,329.2 165.6,331.1 168.9,333.0 172.5,334.7 176.2,336.4 180.2,338.0 184.3,339.5 188.7,340.9 193.2,342.2 197.8,343.5 202.6,344.5 207.5,345.5 212.6,346.4 217.7,347.1 222.9,347.8 228.2,348.3 233.5,348.6 238.9,348.9 244.2,349.0 249.6,349.0 255.0,348.9 260.4,348.7 265.7,348.3 271.0,347.8 276.2,347.2 281.3,346.5 286.3,345.6 291.2,344.7 296.0,343.6 300.6,342.4 600.4,260.8 602.6,260.2 604.7,259.6 606.7,258.9 608.8,258.3 610.8,257.6 612.7,256.9 614.6,256.1 616.5,255.4 618.3,254.6 620.1,253.8 621.8,253.0 623.5,252.2 625.1,251.3 626.7,250.5 628.2,249.6 629.7,248.7 631.1,247.8 632.5,246.8 633.8,245.9 635.1,244.9 636.3,243.9 637.4,243.0 638.5,241.9 639.5,240.9 640.5,239.9 641.4,238.9 642.3,237.8 643.1,236.8 643.8,235.7 644.5,234.6 645.1,233.6 645.6,232.5 646.1,231.4 646.5,230.3 646.9,229.2 647.1,228.1 647.4,227.0 647.5,225.9 647.6,224.8 647.7,223.7 647.7,310.7 647.6,311.8 647.5,312.9 647.4,314.0 647.1,315.1 646.9,316.2 646.5,317.3 646.1,318.4 645.6,319.5 645.1,320.6 644.5,321.6 643.8,322.7 643.1,323.8 642.3,324.8 641.4,325.9 640.5,326.9 639.5,327.9 638.5,328.9 637.4,330.0 636.3,330.9 635.1,331.9 633.8,332.9 632.5,333.8 631.1,334.8 629.7,335.7 628.2,336.6 626.7,337.5 625.1,338.3 623.5,339.2 621.8,340.0 620.1,340.8 618.3,341.6 616.5,342.4 614.6,343.1 612.7,343.9 610.8,344.6 608.8,345.3 606.7,345.9 604.7,346.6 602.6,347.2 600.4,347.8 300.6,429.4 296.0,430.6 291.2,431.7 286.3,432.6 281.3,433.5 276.2,434.2 271.0,434.8 265.7,435.3 260.4,435.7 255.0,435.9 249.6,436.0 244.2,436.0 238.9,435.9 233.5,435.6 228.2,435.3 222.9,434.8 217.7,434.1 212.6,433.4 207.5,432.5 202.6,431.5 197.8,430.5 193.2,429.2 188.7,427.9 184.3,426.5 180.2,425.0 176.2,423.4 172.5,421.7 168.9,420.0 165.6,418.1 162.5,416.2 159.6,414.2 157.0,412.1 154.6,410.0 152.5,407.8 150.7,405.6 149.1,403.4 147.8,401.1 146.8,398.8 146.1,396.4 145.7,394.1 145.5,391.7" fill="url(#g3)" />
<path d="M302.6 429.1L600.4 348.0" stroke="#b4acbc" stroke-width="2"/>
<polygon points="192.8,267.6 186.2,269.5 180.0,271.7 174.3,274.1 169.0,276.6 164.1,279.3 159.8,282.2 156.0,285.3 152.8,288.4 150.1,291.7 148.1,295.0 146.6,298.4 145.8,301.8 145.6,305.3 146.0,308.7 147.0,312.2 148.6,315.6 150.9,318.9 153.7,322.1 157.2,325.3 161.1,328.3 165.6,331.1 170.6,333.8 176.1,336.4 182.0,338.7 188.3,340.8 194.9,342.7 201.9,344.4 209.2,345.8 216.7,347.0 224.3,347.9 232.1,348.6 240.0,348.9 248.0,349.1 255.9,348.9 263.8,348.5 271.5,347.8 279.2,346.8 286.6,345.6 293.8,344.1 300.6,342.4 600.4,260.8 607.0,258.9 613.2,256.7 618.9,254.3 624.2,251.8 629.1,249.1 633.4,246.2 637.2,243.1 640.4,240.0 643.1,236.7 645.1,233.4 646.6,230.0 647.4,226.6 647.6,223.1 647.2,219.7 646.2,216.2 644.6,212.8 642.3,209.5 639.5,206.3 636.0,203.1 632.1,200.1 627.6,197.3 622.6,194.6 617.1,192.0 611.2,189.7 604.9,187.6 598.3,185.7 591.3,184.0 584.0,182.6 576.5,181.4 568.9,180.5 561.1,179.8 553.2,179.5 545.2,179.3 537.3,179.5 529.4,179.9 521.7,180.6 514.0,181.6 506.6,182.8 499.4,184.3 492.6,186.0" fill="#827c8a" />
<polygon points="169.0,282.7 530.3,183.6 530.3,269.1 259.0,341.8" fill="#b4acbc" />
<polygon points="530.3,183.6 619.2,245.3 530.3,269.1" fill="#8a8492" />
<path d="M530.3 183.6V261" stroke="#1e5a3c" stroke-width="1.2"/>
<path d="M262.0 342.0a4.5 2.2 -15 0 1 9.0 -2.4zM270.5 339.7a4.5 2.2 -15 0 1 9.0 -2.4zM279.0 337.5a4.5 2.2 -15 0 1 9.0 -2.4zM287.5 335.2a4.5 2.2 -15 0 1 9.0 -2.4zM296.0 332.9a4.5 2.2 -15 0 1 9.0 -2.4zM304.5 330.6a4.5 2.2 -15 0 1 9.0 -2.4zM313.0 328.4a4.5 2.2 -15 0 1 9.0 -2.4zM321.5 326.1a4.5 2.2 -15 0 1 9.0 -2.4zM330.0 323.8a4.5 2.2 -15 0 1 9.0 -2.4zM338.5 321.5a4.5 2.2 -15 0 1 9.0 -2.4zM347.0 319.2a4.5 2.2 -15 0 1 9.0 -2.4zM355.5 317.0a4.5 2.2 -15 0 1 9.0 -2.4zM364.0 314.7a4.5 2.2 -15 0 1 9.0 -2.4zM372.5 312.4a4.5 2.2 -15 0 1 9.0 -2.4zM381.0 310.1a4.5 2.2 -15 0 1 9.0 -2.4zM389.5 307.9a4.5 2.2 -15 0 1 9.0 -2.4zM398.0 305.6a4.5 2.2 -15 0 1 9.0 -2.4zM406.5 303.3a4.5 2.2 -15 0 1 9.0 -2.4zM415.0 301.0a4.5 2.2 -15 0 1 9.0 -2.4zM423.5 298.7a4.5 2.2 -15 0 1 9.0 -2.4zM432.0 296.5a4.5 2.2 -15 0 1 9.0 -2.4zM440.5 294.2a4.5 2.2 -15 0 1 9.0 -2.4zM449.0 291.9a4.5 2.2 -15 0 1 9.0 -2.4zM457.5 289.6a4.5 2.2 -15 0 1 9.0 -2.4zM466.0 287.4a4.5 2.2 -15 0 1 9.0 -2.4zM474.5 285.1a4.5 2.2 -15 0 1 9.0 -2.4zM483.0 282.8a4.5 2.2 -15 0 1 9.0 -2.4zM491.5 280.5a4.5 2.2 -15 0 1 9.0 -2.4zM500.0 278.2a4.5 2.2 -15 0 1 9.0 -2.4zM508.5 276.0a4.5 2.2 -15 0 1 9.0 -2.4zM517.0 273.7a4.5 2.2 -15 0 1 9.0 -2.4zM525.5 271.4a4.5 2.2 -15 0 1 9.0 -2.4z" fill="#827c8a"/>
<clipPath id="capclip"><polygon points="140,260 169,282.67 259,341.828 262,360 140,360"/><polygon points="531,170 619.2,245.3 660,262 660,170"/></clipPath>
<path d="M177.0 279.2l-1.7 1.1M169.7 284.4l-3.1 3.0M160.1 291.8l-0.9 2.3M160.2 314.5l2.8 3.4M175.8 329.5l3.3 1.6M185.3 333.8l1.7 0.6M195.3 335.7l2.1 0.5M206.1 339.2l4.4 0.8M217.9 342.9l3.5 0.4M228.0 343.0l2.9 0.2M248.3 342.7l4.3 -0.2M260.8 343.6l2.5 -0.2M270.7 342.4l4.9 -0.8M292.8 339.3l2.4 -0.6M305.0 334.5l3.3 -0.9M334.9 326.5l3.5 -1.0M357.5 322.4l1.6 -0.4M368.9 316.9l3.9 -1.1M379.0 315.2l4.7 -1.3M389.7 312.0l3.5 -1.0M409.6 308.2l1.9 -0.5M419.2 302.9l1.5 -0.4M430.6 299.8l2.7 -0.7M440.9 296.8l2.9 -0.8M472.3 289.5l2.0 -0.5M495.0 284.5l1.9 -0.5M505.4 280.0l4.8 -1.3M515.9 277.2l1.6 -0.4M526.7 273.6l4.3 -1.2M536.5 271.3l2.3 -0.6M546.6 270.5l1.9 -0.5M558.3 267.6l4.8 -1.3M569.9 263.5l4.1 -1.1M602.2 254.1l4.3 -1.7M611.7 251.6l3.8 -2.0M621.5 244.8l3.0 -2.4M628.2 240.0l2.6 -4.1M634.0 230.6l0.1 -3.8M628.7 208.2l-2.9 -2.5M622.3 203.4l-3.1 -1.7M592.4 188.4l-1.5 -0.3M581.6 187.4l-4.2 -0.6M570.1 185.1l-2.2 -0.2M558.6 184.8l-4.2 -0.1M526.8 185.6l-3.2 0.4M504.1 187.4l-4.1 1.1M492.1 191.7l-4.2 1.2M482.2 193.7l-4.1 1.1M470.9 196.2l-4.7 1.3M461.5 200.1l-4.4 1.2M449.6 204.3l-4.1 1.1M429.4 209.8l-4.3 1.2M407.4 214.7l-2.0 0.6M399.0 218.2l-3.3 0.9M376.6 224.0l-3.3 0.9M365.2 227.3l-1.7 0.5M356.8 229.6l-4.0 1.1M344.2 233.3l-3.5 1.0M333.6 236.1l-4.5 1.2M323.4 236.8l-3.5 1.0M313.4 239.6l-2.7 0.7M282.3 249.0l-2.0 0.6M270.8 251.1l-2.6 0.7M258.9 255.6l-4.6 1.3M247.8 256.6l-2.5 0.7M239.5 261.9l-4.2 1.2M228.3 263.8l-2.0 0.5M218.2 268.1l-4.6 1.3" stroke="#e8e4ee" stroke-width="1.3" fill="none" clip-path="url(#capclip)"/>
<path d="M205.9 278.6l-2.7 0.9M182.0 288.0l-3.2 3.3M174.0 297.7l-0.2 1.6M172.1 308.9l2.4 3.2M192.1 327.6l4.4 1.7M202.7 330.8l4.0 1.0M216.3 333.3l4.0 0.6M228.7 337.4l2.2 0.1M254.0 336.9l4.6 -0.4M268.1 337.3l1.6 -0.3M293.9 331.7l1.9 -0.5M342.6 316.9l1.5 -0.4M356.1 313.9l2.9 -0.8M381.8 308.0l2.0 -0.6M405.5 299.1l3.5 -1.0M418.0 297.0l4.8 -1.3M432.0 291.6l2.2 -0.6M444.5 290.4l3.7 -1.0M469.5 282.6l4.4 -1.2M482.1 277.9l4.8 -1.3M494.2 275.1l2.6 -0.7M505.7 272.9l2.5 -0.7M532.8 266.6l1.5 -0.4M543.8 263.0l3.8 -1.0M558.5 258.6l2.2 -0.6M569.2 256.0l4.4 -1.2M593.3 249.7l2.2 -1.0M616.8 233.2l1.7 -4.6M606.5 203.1l-3.3 -1.5M579.5 194.9l-1.9 -0.3M567.8 193.0l-1.7 -0.2M556.2 190.2l-2.8 -0.0M543.2 191.0l-4.2 0.3M503.9 195.5l-2.0 0.6M489.5 199.2l-2.2 0.6M478.1 202.6l-3.3 0.9M466.0 208.3l-4.6 1.3M441.0 213.9l-4.4 1.2M427.0 217.7l-4.5 1.2M416.4 221.3l-2.5 0.7M390.6 227.9l-3.0 0.8M366.7 233.5l-2.7 0.7M353.4 238.8l-3.9 1.1M328.5 244.3l-3.5 1.0M289.0 254.3l-2.1 0.6M276.3 259.0l-3.3 0.9M263.7 263.0l-4.1 1.1M254.1 266.0l-4.7 1.3M228.4 270.9l-2.2 0.6" stroke="#e8e4ee" stroke-width="1.1" fill="none" clip-path="url(#capclip)"/>
<path d="M217.1 285.2l-3.8 1.5M199.1 290.1l-3.1 3.6M191.0 301.6l1.7 3.4M197.2 317.4l2.1 1.1M246.5 328.8l4.7 -0.3M263.0 327.8l1.9 -0.4M294.8 322.5l2.2 -0.6M313.5 316.7l2.4 -0.7M329.8 312.7l2.1 -0.6M344.3 307.3l4.5 -1.2M409.0 290.4l3.5 -0.9M427.8 285.3l2.5 -0.7M443.9 279.6l3.1 -0.8M460.4 277.5l1.5 -0.4M492.7 266.0l2.7 -0.7M542.5 255.4l2.1 -0.6M557.7 249.7l2.6 -0.7M575.3 246.1l1.8 -0.6M591.8 238.2l1.2 -1.1M603.9 227.6l-1.1 -3.5M597.5 212.3l-3.0 -1.7M532.1 197.8l-4.9 0.9M516.1 201.4l-3.2 0.9M499.8 206.4l-4.2 1.2M467.1 216.6l-1.6 0.4M434.8 225.4l-4.7 1.3M402.6 232.8l-2.0 0.5M386.2 239.3l-4.8 1.3M369.4 242.3l-3.1 0.8M351.3 246.5l-2.8 0.8M336.3 251.3l-4.7 1.3M318.9 256.6l-1.7 0.5M304.0 261.1l-2.7 0.7M287.5 264.3l-3.7 1.0M270.3 270.0l-2.4 0.7M255.3 274.1l-2.4 0.7M237.7 277.3l-1.5 0.4M222.1 283.0l-3.0 0.8" stroke="#bdb7c4" stroke-width="1" fill="none" clip-path="url(#capclip)"/>
<path d="M169 282.67L259 341.828" stroke="#8e8896" stroke-width="1"/>
<path d="M530.3 183.619L619.2 245.3" stroke="#969099" stroke-width="1.5"/>
<g>
<ellipse cx="115.500" cy="426.800" rx="37.200" ry="14.600" transform="rotate(-3 115.5 426.8)" fill="#c46a9e"/>
<ellipse cx="113" cy="427.600" rx="32.500" ry="11.400" transform="rotate(-4 113 427.6)" fill="#f88ed0"/>
<ellipse cx="118" cy="424.500" rx="20" ry="6" transform="rotate(-4 118 424.5)" fill="#fa98d6"/>
<path d="M83.400 445 Q88 457 106.900 463 L108 458.500 Q94 453.500 86.500 442Z" fill="#c46a9e"/>
<path d="M86 449 Q92 458 106.500 462.500 L107.300 460 Q95 456 88 447.500Z" fill="#f88ed0"/>
<polygon points="80.200,422.300 91,422.300 115.300,436.900 108.750,455.600 104,457.500 82.500,445.300" fill="#948e9a"/>
<polygon points="80.200,422.300 88.500,422.300 93,451 82.500,445.300" fill="#cfcad4"/>
<path d="M80.8 424.5h7.5M81.1 427.5h7.9M81.4 430.5h8.3M81.7 433.5h8.7M82.0 436.5h9.1M82.3 439.5h9.5M82.6 442.5h9.9M82.9 445.5h10.3" stroke="#f4f2f6" stroke-width="1.2"/>
<path d="M92.0 426.0h1.6M95.2 427.1h1.6M98.4 428.2h1.6M101.6 429.3h1.6M104.8 430.4h1.6M108.0 431.5h1.6M92.9 429.2h1.6M96.1 430.3h1.6M99.3 431.4h1.6M102.5 432.5h1.6M105.7 433.6h1.6M108.9 434.7h1.6M93.8 432.4h1.6M97.0 433.5h1.6M100.2 434.6h1.6M103.4 435.7h1.6M106.6 436.8h1.6M109.8 437.9h1.6M94.7 435.6h1.6M97.9 436.7h1.6M101.1 437.8h1.6M104.3 438.9h1.6M107.5 440.0h1.6M110.7 441.1h1.6M95.6 438.8h1.6M98.8 439.9h1.6M102.0 441.0h1.6M105.2 442.1h1.6M108.4 443.2h1.6M96.5 442.0h1.6M99.7 443.1h1.6M102.9 444.2h1.6M106.1 445.3h1.6M109.3 446.4h1.6M97.4 445.2h1.6M100.6 446.3h1.6M103.8 447.4h1.6M107.0 448.5h1.6M98.3 448.4h1.6M101.5 449.5h1.6M104.7 450.6h1.6M107.9 451.7h1.6M99.2 451.6h1.6M102.4 452.7h1.6M105.6 453.8h1.6" stroke="#c4bec8" stroke-width="1.1"/>
<polygon points="86,447 97,459 108,463 132,540 118,537 100,500" fill="#b4acbc" opacity=".5"/>
</g>
<polygon points="682,255 700,256 718,268 719,278.300 712.800,277.900 697,279.700" fill="#000"/>
<polygon points="648.100,266 660,260 675.300,255.800 681.500,257.300 694.800,279.500 712.800,277.800 713.600,279.500 708,282.600 684.700,285.300 663.600,285.900 648.100,282" fill="#c46a9e"/>
<polygon points="649.500,275.500 655.800,266.800 675.300,258.800 680,258.400 658,282.600 652,280.500" fill="#f68ecf"/>
<polygon points="651,272 657,266.500 674,259.500 662,272 655,279" fill="#fa9cd8"/>
<polygon points="680,258.400 688.600,279.500 684,283 658,282.600" fill="#c9c1cd"/>
<path d="M681.0 262.5h2.5M678.4 265.5h2.6M675.8 268.5h4.2M673.2 271.5h5.9M670.6 274.5h7.6M668.0 277.5h9.2M665.4 280.5h10.9" stroke="#7a7482" stroke-width="1"/>
<polygon points="680.500,256.800 683.800,257.400 697,279.600 692.500,279.900" fill="#1e6a48"/>
<path d="M702 280.500l9 -1.500" stroke="#f48cc8" stroke-width="1.200"/>
</svg>
<span class="t " style="left:21.0px;top:115px;color:#f08c30;">71.3 MB</span>
<span class="t " style="left:987.5px;top:115px;color:#f08c30;">Printer:</span>
<span class="t " style="left:957.5px;top:128px;color:#f08c30;">&#x27;Potty-04&#x27;</span>
<span class="t " style="left:999.5px;top:154px;color:#f08c30;">Style:</span>
<span class="t " style="left:675.5px;top:167px;color:#f08c30;">&#x27;Ulupov-1-door-PLA-FDP-grey-sery-volk-04&#x27; - Infill: 33.3%</span>
<span class="t " style="left:987.5px;top:193px;color:#f08c30;">Support:</span>
<span class="t " style="left:771.5px;top:206px;color:#f08c30;">&#x27;Ulupov-1-door-PLA-FDP-grey-sery-volk-04&#x27;</span>
<span class="t " style="left:981.5px;top:232px;color:#f08c30;">Material:</span>
<span class="t " style="left:753.5px;top:245px;color:#f08c30;">Ext1 - &#x27;PLA-FDP-gray-sery-wolk-04&#x27; (2.239 m)</span>
<div style="left:1054px;top:102px;width:20px;height:894px;border:1px solid #1a1a1a;border-radius:2.5px;background:linear-gradient(#ececec 0,#cdcdcd 40px,#cdcdcd calc(100% - 45px),#fdfdfd 100%);box-shadow:inset 1px 1px 0 #fafafa,inset -1px 0 0 #f4f4f4"></div>
<div style="left:1062px;top:110px;width:3px;height:883px;background:#000"></div>
<div class="hd" style="left:1056px;top:104px;width:16px;height:13px"><div style="left:2px;top:2px;width:10px;height:7px;border:1px dotted #222"></div><div style="left:4px;top:4px;width:6px;height:3px;border:1px solid #555;border-radius:1px;background:#ddd"></div></div>
<div class="grp" style="left:1079.0px;top:127.0px;width:200.0px;height:788.0px;background:#ccc;border-radius:0;border-color:#333 #666 #333 #333;"></div>
<div class="b" style="left:1186.0px;top:129.0px;width:69.0px;height:20.0px;"></div>
<span class="t " style="left:1194.5px;top:133px;">Ext Matl</span>
<div class="sl" style="left:1262.0px;top:129.0px;width:15.0px;height:785.0px;background:linear-gradient(90deg,#c4c4c4,#d8d8d8);border-color:#888"></div>
<div class="b" style="left:1262.0px;top:129.0px;width:15.0px;height:15.0px;"></div>
<svg class="a" style="left:1265.5px;top:134.0px" width="8" height="5"><polygon points="0,5 8,5 4.0,0" fill="#000"/></svg>
<div class="b" style="left:1262.0px;top:899.0px;width:15.0px;height:15.0px;"></div>
<svg class="a" style="left:1265.5px;top:904.5px" width="8" height="5"><polygon points="0,0 8,0 4.0,5" fill="#000"/></svg>
<div class="b" style="left:1262.0px;top:145.0px;width:14.0px;height:754.0px;background:linear-gradient(#f2f2f2 0,#d4d4d4 22px,#cdcdcd 40px,#cdcdcd calc(100% - 30px),#e8e8e8 100%);box-shadow:inset 0 0 0 1px #f8f8f8;"></div>
<span class="t " style="left:1085.5px;top:142px;">Printer Profile</span>
<div class="b" style="left:1086.0px;top:154.0px;width:175.0px;height:19.0px;"></div>
<div class="sep" style="left:1239.0px;top:157.5px;height:12px"></div>
<svg class="a" style="left:1244px;top:155.75px" width="10" height="16" viewBox="0 0 10 16"><path d="M5 1.5 L9 6.5 L1 6.5Z M5 14.5 L9 9.5 L1 9.5Z" fill="#000"/></svg>
<span class="t " style="left:1089.5px;top:158px;">Potty-04</span>
<span class="t " style="left:1085.5px;top:182px;">Style Profile</span>
<div class="b" style="left:1086.0px;top:194.0px;width:175.0px;height:20.0px;"></div>
<div class="sep" style="left:1239.0px;top:197.5px;height:13px"></div>
<svg class="a" style="left:1244px;top:196.0px" width="10" height="16" viewBox="0 0 10 16"><path d="M5 1.5 L9 6.5 L1 6.5Z M5 14.5 L9 9.5 L1 9.5Z" fill="#000"/></svg>
<span class="t " style="left:1107.5px;top:198px;">Ulupov-1-door-PLA-FDP-</span>
<span class="t " style="left:1085.5px;top:222px;">Support Profile</span>
<div class="b" style="left:1086.0px;top:234.0px;width:175.0px;height:20.0px;"></div>
<div class="sep" style="left:1239.0px;top:237.5px;height:13px"></div>
<svg class="a" style="left:1244px;top:236.0px" width="10" height="16" viewBox="0 0 10 16"><path d="M5 1.5 L9 6.5 L1 6.5Z M5 14.5 L9 9.5 L1 9.5Z" fill="#000"/></svg>
<span class="t " style="left:1107.5px;top:238px;">Ulupov-1-door-PLA-FDP-</span>
<div class="card" style="left:1081.0px;top:259.0px;width:181.0px;height:120.0px;"></div>
<div style="left:1081px;top:257px;width:181px;height:3px;background:#111"></div>
<div class="cb dis" style="left:1086.0px;top:268.0px;width:12.0px;height:12.0px;"></div>
<div class="b" style="left:1248.0px;top:262.0px;width:14.0px;height:16.0px;"></div>
<span class="t " style="left:1250.2px;top:264px;">X</span>
<span class="t " style="left:1187.5px;top:268px;">Count</span>
<div class="b" style="left:1188.0px;top:280.0px;width:13.0px;height:19.0px;"></div>
<svg class="a" style="left:1190.5px;top:285.0px" width="6" height="9"><polygon points="6,0 6,9 0,4.5" fill="#000"/></svg>
<div class="in" style="left:1202.0px;top:280.0px;width:38.0px;height:19.0px;"></div>
<span class="t " style="left:1217.0px;top:284px;">1</span>
<div class="b" style="left:1241.0px;top:280.0px;width:13.0px;height:19.0px;"></div>
<svg class="a" style="left:1245.5px;top:285.0px" width="6" height="9"><polygon points="0,0 0,9 6,4.5" fill="#000"/></svg>
<span class="t " style="left:1187.5px;top:305px;">Height</span>
<div class="ro" style="left:1188.0px;top:318.0px;width:65.0px;height:19.0px;"></div>
<span class="t " style="left:1190.5px;top:322px;">16.1099</span>
<div class="ro" style="left:1188.0px;top:344.0px;width:35.0px;height:18.0px;"></div>
<span class="t " style="left:1190.5px;top:348px;">0</span>
<div class="b" style="left:1224.0px;top:344.0px;width:13.0px;height:9.0px;"></div>
<svg class="a" style="left:1227.0px;top:346.0px" width="7" height="5"><polygon points="0,5 7,5 3.5,0" fill="#000"/></svg>
<div class="b" style="left:1224.0px;top:353.0px;width:13.0px;height:9.0px;"></div>
<svg class="a" style="left:1227.0px;top:355.0px" width="7" height="5"><polygon points="0,0 7,0 3.5,5" fill="#000"/></svg>
<span class="t " style="left:1238.5px;top:348px;">?</span>
<span class="t " style="left:1085.5px;top:365px;">part_1</span>
<svg class="a" style="left:1084px;top:314px" width="100" height="52" viewBox="1084 314 100 52">
<defs>
<linearGradient id="tA" gradientUnits="userSpaceOnUse" x1="1091.500" y1="0" x2="1176" y2="0"><stop offset="0" stop-color="#2e2e2e"/><stop offset=".07" stop-color="#444"/><stop offset=".1" stop-color="#6c6c6c"/><stop offset=".14" stop-color="#909090"/><stop offset=".17" stop-color="#b4b4b4"/><stop offset=".2" stop-color="#c6c6c6"/><stop offset=".88" stop-color="#c0c0c0"/><stop offset=".91" stop-color="#e6e6e6"/><stop offset=".96" stop-color="#dcdcdc"/><stop offset="1" stop-color="#aaaaaa"/></linearGradient>
<linearGradient id="tB" gradientUnits="userSpaceOnUse" x1="1101" y1="0" x2="1166.500" y2="0"><stop offset="0" stop-color="#303030"/><stop offset=".1" stop-color="#484848"/><stop offset=".15" stop-color="#787878"/><stop offset=".19" stop-color="#9a9a9a"/><stop offset=".22" stop-color="#b8b8b8"/><stop offset=".26" stop-color="#c4c4c4"/><stop offset=".85" stop-color="#c2c2c2"/><stop offset=".9" stop-color="#ececec"/><stop offset=".96" stop-color="#d0d0d0"/><stop offset="1" stop-color="#a8a8a8"/></linearGradient>
<linearGradient id="tC" x1="0" y1="0" x2="0" y2="1"><stop offset="0" stop-color="#b4b4b4"/><stop offset=".7" stop-color="#a6a6a6"/><stop offset="1" stop-color="#888"/></linearGradient>
</defs>
<path d="M1086.500 351 Q1087 343.500 1098 340 L1160 327.500 Q1176 325.500 1180.500 337 Q1183 347 1168 352.500 L1108 362.500 Q1090 364 1086.500 353Z" fill="url(#tC)"/>
<path d="M1091.500 342 L1091.500 352 Q1094 360 1106 360 L1166 350.500 Q1175 348 1176 343 L1176 332 Z" fill="url(#tA)"/>
<path d="M1091.500 343 Q1091.500 336.500 1102 334.500 L1160 325.500 Q1173 324.500 1176 331 Q1176.500 335.500 1166 338.300 L1110 348.300 Q1093 350 1091.500 343Z" fill="#aeaeae"/>
<path d="M1092 341 l5 -2 l1 3 l-5.500 2z" fill="#f4f4f4"/>
<ellipse cx="1171" cy="331" rx="3" ry="1.800" fill="#c4c4c4"/>
<path d="M1101 331 L1101 340 Q1103 347 1114 347.500 L1157 340 Q1166 337.500 1166.500 333 L1166.500 323.500 Z" fill="url(#tB)"/>
<path d="M1101 331.500 Q1101 326 1110 324.500 L1150 318 Q1163 316.500 1166.500 323 Q1167 329 1158 331.500 L1114 337.800 Q1102 338 1101 331.500Z" fill="#a6a6a6"/>
<path d="M1106.600 327.200 L1154.800 318.600 L1155.600 328.500 L1109.600 334.900Z" fill="#c4c4c4"/>
<path d="M1108.300 331.500 L1155.300 324.500 L1155.600 328.500 L1109.600 334.900Z" fill="#a2a2a2"/>
<path d="M1155.400 318.800 L1160.800 329.300 L1156 330.600Z" fill="#363636"/>
</svg>
<span class="t " style="left:1153.0px;top:923px;">2.24 [m]</span>
<div class="b" style="left:1079.0px;top:941.0px;width:75.0px;height:25.0px;"></div>
<div class="sep" style="left:1132.0px;top:944.5px;height:18px"></div>
<svg class="a" style="left:1137px;top:945.5px" width="10" height="16" viewBox="0 0 10 16"><path d="M5 1.5 L9 6.5 L1 6.5Z M5 14.5 L9 9.5 L1 9.5Z" fill="#000"/></svg>
<span class="t " style="left:1083.5px;top:948px;">G-code</span>
<span class="t " style="left:1078.5px;top:967px;">Z value</span>
<span class="t " style="left:1077.0px;top:984px;">16.200</span>
<div class="in" style="left:1159.0px;top:941.0px;width:120.0px;height:55.0px;"></div>
<span class="t " style="left:1161.5px;top:944px;"> [cm^3] 5.39</span>
<span class="t " style="left:1161.5px;top:957px;">    [$] 0.00</span>
<span class="t " style="left:1161.5px;top:970px;">[HH:MM] 1:15.8</span>
<div style="left:0.5px;top:648px;width:721px;height:349px;background:#cbcbcb;border-radius:6px 6px 0 0;border:1px solid #b0b0b0;border-bottom:0;overflow:hidden"><div style="left:0;top:0;width:721px;height:24.5px;background:linear-gradient(#dedede,#d8d8d8)"></div><div style="left:0;top:24px;width:5px;height:330px;background:linear-gradient(90deg,#9a9a9a,#c4c4c4)"></div></div>
<span style="left:304.5px;top:653.5px;font:bold 13.3px/18px 'Liberation Sans','DejaVu Sans',sans-serif;color:#aeaeae;white-space:pre;transform:scaleX(0.9951);transform-origin:0 0;">KISSlicer Settings</span>
<div style="left:698px;top:653.5px;width:14px;font:bold 16px/18px 'Liberation Sans',sans-serif;color:#b0b0b0">×</div>
<div class="grp" style="left:6.0px;top:703.0px;width:540.0px;height:297.0px;background:linear-gradient(#ededed 0,#cccccc 22px,#cccccc 100%);"></div>
<div class="tab" style="left:8px;top:675px;width:40px;height:29px;"></div>
<span class="t " style="left:11.5px;top:685px;z-index:3;">Style</span>
<div class="tab" style="left:50px;top:673px;width:52px;height:32px;background:linear-gradient(#f0f0f0,#cfcfcf 70%,#cccccc);border-bottom:0;z-index:2"></div>
<span class="t " style="left:53.5px;top:684px;z-index:3;">Support</span>
<div class="tab" style="left:104px;top:675px;width:52px;height:29px;"></div>
<span class="t " style="left:107.5px;top:685px;z-index:3;">Ext Map</span>
<div class="tab" style="left:158px;top:675px;width:52px;height:29px;"></div>
<span class="t " style="left:161.5px;top:685px;z-index:3;">Printer</span>
<div class="tab" style="left:212px;top:675px;width:78px;height:29px;"></div>
<span class="t " style="left:241.5px;top:679px;">Printer</span>
<span class="t " style="left:244.5px;top:692px;">G-code</span>
<svg class="a" style="left:221.0px;top:679.5px" width="12" height="22"><polygon points="12,0 12,22 0,11.0" fill="#000"/></svg>
<div class="tab" style="left:292px;top:675px;width:34px;height:29px;"></div>
<span class="t " style="left:295.5px;top:685px;z-index:3;">Matl</span>
<div class="tab" style="left:328px;top:675px;width:72px;height:29px;"></div>
<span class="t " style="left:363.0px;top:679px;">Matl</span>
<span class="t " style="left:357.0px;top:692px;">G-code</span>
<svg class="a" style="left:337.0px;top:679.5px" width="12" height="22"><polygon points="12,0 12,22 0,11.0" fill="#000"/></svg>
<div class="tab" style="left:402px;top:675px;width:40px;height:29px;"></div>
<span class="t " style="left:405.5px;top:685px;z-index:3;">Misc.</span>
<div class="tab" style="left:444px;top:675px;width:28px;height:29px;"></div>
<span class="t " style="left:447.5px;top:685px;color:#999;z-index:3;">PRO</span>
<span class="t " style="left:30.0px;top:715px;">Support Name</span>
<div class="b" style="left:106.0px;top:708.0px;width:425.0px;height:24.0px;"></div>
<span class="t " style="left:127.5px;top:715px;">Ulupov-1-door-PLA-FDP-grey-sery-volk-04</span>
<span class="t " style="left:446.0px;top:715px;">2018-11-02</span>
<div class="sep" style="left:509.5px;top:712px;height:17px"></div>
<svg class="a" style="left:514.5px;top:712.5px" width="10" height="16" viewBox="0 0 10 16"><path d="M5 1.5 L9 6.5 L1 6.5Z M5 14.5 L9 9.5 L1 9.5Z" fill="#000"/></svg>
<div class="cb" style="left:14.0px;top:732.0px;width:12.0px;height:12.0px;"></div>
<div style="left:29px;top:736px;width:12px;height:2px;background:#000"></div><div style="left:34px;top:731px;width:2px;height:12px;background:#000"></div>
<svg class="a" style="left:31.5px;top:756.0px" width="5" height="10"><polygon points="5,0 5,10 0,5.0" fill="#000"/></svg>
<span class="t " style="left:40.0px;top:756px;">Off [Support: Dense] On</span>
<svg class="a" style="left:185.0px;top:756.0px" width="5" height="10"><polygon points="0,0 0,10 5,5.0" fill="#000"/></svg>
<div class="sl" style="left:11.0px;top:768.0px;width:200.0px;height:20.0px;"></div>
<div class="trk" style="left:14px;top:777px;width:194px"></div>
<div class="hd" style="left:135px;top:770px;width:13px;height:16px"><i></i></div>
<span class="t " style="left:225.0px;top:743px;">Main</span>
<span class="t " style="left:222.0px;top:756px;">XYgap</span>
<div class="in" style="left:216.0px;top:768.0px;width:45.0px;height:20.0px;"></div>
<span class="t " style="left:217.5px;top:772px;">100%</span>
<span class="t " style="left:282.0px;top:743px;">Raft</span>
<span class="t " style="left:282.0px;top:756px;">Type</span>
<div class="b" style="left:266.0px;top:768.0px;width:60.0px;height:25.0px;"></div>
<div class="sep" style="left:304.0px;top:771.5px;height:18px"></div>
<svg class="a" style="left:309px;top:772.5px" width="10" height="16" viewBox="0 0 10 16"><path d="M5 1.5 L9 6.5 L1 6.5Z M5 14.5 L9 9.5 L1 9.5Z" fill="#000"/></svg>
<span class="t " style="left:270.0px;top:775px;">Off</span>
<span class="t " style="left:355.0px;top:741px;">Prime Pillar / Wall</span>
<div class="b" style="left:331.0px;top:753.0px;width:165.0px;height:40.0px;"></div>
<div class="sep" style="left:474.0px;top:764.0px;height:18px"></div>
<svg class="a" style="left:479px;top:765.0px" width="10" height="16" viewBox="0 0 10 16"><path d="M5 1.5 L9 6.5 L1 6.5Z M5 14.5 L9 9.5 L1 9.5Z" fill="#000"/></svg>
<span class="t " style="left:335.0px;top:767px;">No Prime Structure</span>
<div style="left:501px;top:753px;width:40px;height:40px;border:1px solid #1a1a1a;border-radius:50%"></div><div style="left:525px;top:763px;width:6px;height:6px;border-radius:50%;background:#555"></div>
<span class="t " style="left:10.5px;top:801px;">Support / Object Interface (in [mm])</span>
<div class="grp" style="left:11.0px;top:814.0px;width:310.0px;height:99.0px;"></div>
<div class="b" style="left:16.0px;top:818.0px;width:100.0px;height:20.0px;"></div>
<div class="cb" style="left:21.0px;top:822.0px;width:12.0px;height:12.0px;"></div>
<span class="t " style="left:34.5px;top:822px;">Also on Top</span>
<div class="b" style="left:16.0px;top:848.0px;width:95.0px;height:20.0px;"></div>
<div class="cb" style="left:21.0px;top:852.0px;width:12.0px;height:12.0px;"></div>
<span class="t " style="left:34.5px;top:852px;">Make Solid</span>
<div class="b" style="left:261.0px;top:818.0px;width:55.0px;height:20.0px;"></div>
<div class="cb" style="left:266.0px;top:822.0px;width:12.0px;height:12.0px;"></div>
<span class="t " style="left:280.5px;top:822px;">Bond</span>
<span class="t " style="left:167.0px;top:823px;">interface</span>
<span class="t " style="left:125.0px;top:836px;">Z Band</span>
<div class="in" style="left:126.0px;top:848.0px;width:35.0px;height:20.0px;"></div>
<span class="t " style="left:127.5px;top:852px;">0.8</span>
<span class="t " style="left:178.0px;top:836px;">XYgap</span>
<div class="in" style="left:171.0px;top:848.0px;width:45.0px;height:20.0px;"></div>
<span class="t " style="left:172.5px;top:852px;">100%</span>
<span class="t " style="left:230.5px;top:836px;">Zgap</span>
<div class="in" style="left:226.0px;top:848.0px;width:35.0px;height:20.0px;"></div>
<span class="t " style="left:227.5px;top:852px;">0.2</span>
<span class="t " style="left:20.0px;top:876px;">Angle</span>
<div class="in" style="left:16.0px;top:888.0px;width:40.0px;height:20.0px;"></div>
<span class="t " style="left:17.5px;top:892px;">30</span>
<span class="t " style="left:61.0px;top:876px;">Stride</span>
<div class="in" style="left:61.0px;top:888.0px;width:40.0px;height:20.0px;"></div>
<span class="t " style="left:62.5px;top:892px;">0.6</span>
<span class="t " style="left:109.0px;top:876px;">Width</span>
<div class="in" style="left:106.0px;top:888.0px;width:40.0px;height:20.0px;"></div>
<span class="t " style="left:107.5px;top:892px;">0.4</span>
<span class="t " style="left:148.5px;top:876px;">1st Width</span>
<div class="in" style="left:156.0px;top:888.0px;width:40.0px;height:20.0px;"></div>
<span class="t " style="left:157.5px;top:892px;">0.6</span>
<span class="t " style="left:208.0px;top:876px;">1st Zgap</span>
<div class="in" style="left:211.0px;top:888.0px;width:45.0px;height:20.0px;"></div>
<span class="t " style="left:212.5px;top:892px;">0.2</span>
<span class="t " style="left:266.0px;top:863px;">Raft Int</span>
<span class="t " style="left:272.0px;top:876px;">Layers</span>
<div class="b" style="left:266.0px;top:888.0px;width:10.0px;height:20.0px;"></div>
<svg class="a" style="left:267.5px;top:893.5px" width="5" height="9"><polygon points="5,0 5,9 0,4.5" fill="#000"/></svg>
<div class="ro" style="left:277.0px;top:888.0px;width:28.0px;height:20.0px;background:linear-gradient(90deg,#fff,#d0d0d0);box-shadow:none;"></div>
<span class="t " style="left:287.0px;top:893px;">0</span>
<div class="b" style="left:306.0px;top:888.0px;width:10.0px;height:20.0px;"></div>
<svg class="a" style="left:309.5px;top:893.5px" width="5" height="9"><polygon points="0,0 0,9 5,4.5" fill="#000"/></svg>
<span class="t " style="left:332.0px;top:801px;">Support 50 [deg]</span>
<div class="sl" style="left:331.0px;top:813.0px;width:100.0px;height:20.0px;"></div>
<div class="trk" style="left:334px;top:822px;width:94px"></div>
<div class="hd" style="left:379px;top:815px;width:13px;height:16px"><i></i></div>
<span class="t " style="left:441.0px;top:801px;">Inflate Support</span>
<div class="in" style="left:461.0px;top:813.0px;width:50.0px;height:20.0px;"></div>
<span class="t " style="left:462.5px;top:817px;">0</span>
<span class="t " style="left:359.5px;top:843px;">Support</span>
<span class="t " style="left:347.0px;top:856px;">Z-Roof [mm]</span>
<div class="in" style="left:331.0px;top:868.0px;width:100.0px;height:20.0px;"></div>
<span class="t " style="left:332.5px;top:872px;">-1</span>
<span class="t " style="left:326.0px;top:896px;color:#999;">Inflate Raft</span>
<span class="t " style="left:332.0px;top:909px;color:#999;">&amp; Prime Gap</span>
<div class="in dis" style="left:401.0px;top:898.0px;width:40.0px;height:20.0px;"></div>
<span class="t " style="left:402.5px;top:902px;color:#999;">0</span>
<span class="t " style="left:445.0px;top:841px;">Sheathe</span>
<div class="grp" style="left:446.0px;top:854.0px;width:95.0px;height:84.0px;"></div>
<span class="t " style="left:480.5px;top:861px;">Mode</span>
<div class="b" style="left:451.0px;top:873.0px;width:85.0px;height:20.0px;"></div>
<div class="sep" style="left:514.0px;top:876.5px;height:13px"></div>
<svg class="a" style="left:519px;top:875.0px" width="10" height="16" viewBox="0 0 10 16"><path d="M5 1.5 L9 6.5 L1 6.5Z M5 14.5 L9 9.5 L1 9.5Z" fill="#000"/></svg>
<span class="t " style="left:455.0px;top:877px;">Disabled</span>
<span class="t " style="left:459.0px;top:901px;color:#999;">Z-Roof [mm]</span>
<div class="in dis" style="left:451.0px;top:913.0px;width:85.0px;height:20.0px;"></div>
<span class="t " style="left:452.5px;top:917px;color:#999;">2</span>
<span class="t " style="left:10.5px;top:921px;">Raft Grid Options (in [mm])</span>
<div class="grp" style="left:11.0px;top:934.0px;width:300.0px;height:54.0px;"></div>
<svg class="a" style="left:18.5px;top:942.7px" width="12" height="6.6"><polygon points="0,6.6 12,6.6 6.0,0" fill="#000"/></svg>
<span class="t " style="left:31.0px;top:942px;">Stride</span>
<div class="in" style="left:71.0px;top:938.0px;width:40.0px;height:20.0px;"></div>
<span class="t " style="left:72.5px;top:942px;">0.8</span>
<svg class="a" style="left:18.5px;top:970.0px" width="12" height="6"><polygon points="0,0 12,0 6.0,6" fill="#000"/></svg>
<span class="t " style="left:31.0px;top:967px;">Stride</span>
<div class="in" style="left:71.0px;top:963.0px;width:40.0px;height:20.0px;"></div>
<span class="t " style="left:72.5px;top:967px;">1.6</span>
<svg class="a" style="left:120.0px;top:942.7px" width="12" height="6.6"><polygon points="0,6.6 12,6.6 6.0,0" fill="#000"/></svg>
<span class="t " style="left:132.5px;top:942px;">Thick</span>
<div class="in" style="left:166.0px;top:938.0px;width:40.0px;height:20.0px;"></div>
<span class="t " style="left:167.5px;top:942px;">0.2</span>
<svg class="a" style="left:120.0px;top:970.0px" width="12" height="6"><polygon points="0,0 12,0 6.0,6" fill="#000"/></svg>
<span class="t " style="left:132.5px;top:967px;">Thick</span>
<div class="in" style="left:166.0px;top:963.0px;width:40.0px;height:20.0px;"></div>
<span class="t " style="left:167.5px;top:967px;">0.4</span>
<svg class="a" style="left:219.5px;top:942.7px" width="12" height="6.6"><polygon points="0,6.6 12,6.6 6.0,0" fill="#000"/></svg>
<span class="t " style="left:232.0px;top:942px;">Width</span>
<div class="in" style="left:266.0px;top:938.0px;width:40.0px;height:20.0px;"></div>
<span class="t " style="left:267.5px;top:942px;">0.4</span>
<svg class="a" style="left:219.5px;top:970.0px" width="12" height="6"><polygon points="0,0 12,0 6.0,6" fill="#000"/></svg>
<span class="t " style="left:232.0px;top:967px;">Width</span>
<div class="in" style="left:266.0px;top:963.0px;width:40.0px;height:20.0px;"></div>
<span class="t " style="left:267.5px;top:967px;">0.8</span>
<span class="t " style="left:316.0px;top:931px;">Brim / Skirt (in [mm])</span>
<div class="grp" style="left:316.0px;top:944.0px;width:225.0px;height:44.0px;"></div>
<span class="t " style="left:333.5px;top:951px;">Dia</span>
<div class="in" style="left:321.0px;top:963.0px;width:45.0px;height:20.0px;"></div>
<span class="t " style="left:322.5px;top:967px;">0</span>
<span class="t " style="left:391.0px;top:951px;">Ht</span>
<div class="in" style="left:376.0px;top:963.0px;width:45.0px;height:20.0px;"></div>
<span class="t " style="left:377.5px;top:967px;">0</span>
<span class="t " style="left:443.0px;top:951px;">Gap</span>
<div class="in" style="left:431.0px;top:963.0px;width:45.0px;height:20.0px;"></div>
<span class="t " style="left:432.5px;top:967px;">0</span>
<span class="t " style="left:481.0px;top:952px;">Fillet</span>
<div class="cb" style="left:524.0px;top:952.0px;width:12.0px;height:12.0px;"></div>
<span class="t " style="left:487.0px;top:972px;">Latch</span>
<div class="cb" style="left:524.0px;top:972.0px;width:12.0px;height:12.0px;"></div>
<span class="t " style="left:560.5px;top:716px;">Settings Level</span>
<svg class="a" style="left:668.0px;top:719.5px" width="12" height="7"><polygon points="0,0 12,0 6.0,7" fill="#909090"/></svg>
<span class="t " style="left:680.0px;top:716px;color:#999;">Force</span>
<div class="b" style="left:561.0px;top:729.0px;width:125.0px;height:24.0px;"></div>
<div class="sep" style="left:664.0px;top:732.5px;height:17px"></div>
<svg class="a" style="left:669px;top:732.75px" width="10" height="16" viewBox="0 0 10 16"><path d="M5 1.5 L9 6.5 L1 6.5Z M5 14.5 L9 9.5 L1 9.5Z" fill="#000"/></svg>
<span class="t " style="left:565.0px;top:735px;">Expert</span>
<div class="cb dis" style="left:694.0px;top:734.0px;width:12.0px;height:13.0px;"></div>
<span class="t " style="left:566.5px;top:766px;">TYPE: [mm/s], [mm^3/s]</span>
<span class="t " style="left:566.5px;top:779px;"> Perim:   10.00,  1.0</span>
<span class="t " style="left:566.5px;top:792px;"> Loops:   15.00,  1.5</span>
<span class="t " style="left:566.5px;top:805px;"> Solid:   20.00,  2.0</span>
<span class="t " style="left:566.5px;top:818px;"> Sparse:  25.00,  2.5</span>
<div class="grp" style="left:616.0px;top:843.0px;width:100.0px;height:80.0px;"></div>
<div class="o" style="left:621.0px;top:848.0px;width:70.0px;height:50.0px;"></div>
<span class="t " style="left:636.5px;top:867px;">Center</span>
<div class="b" style="left:696.0px;top:848.0px;width:15.0px;height:70.0px;background:linear-gradient(90deg,#e4e4e4,#c8c8c8 50%,#dcdcdc);"></div>
<div class="b" style="left:698.0px;top:875.0px;width:11.0px;height:17.0px;"></div>
<div class="b" style="left:621.0px;top:903.0px;width:70.0px;height:15.0px;background:linear-gradient(#e4e4e4,#c8c8c8 50%,#dcdcdc);"></div>
<div class="b" style="left:648.0px;top:904.0px;width:17.0px;height:12.0px;"></div>
<span class="t " style="left:550.5px;top:903px;">Support</span>
<span class="t " style="left:550.5px;top:916px;">Profile</span>
<div class="grp" style="left:551.0px;top:928.0px;width:165.0px;height:40.0px;"></div>
<div class="o" style="left:556.0px;top:933.0px;width:40.0px;height:30.0px;"></div>
<span class="t " style="left:562.5px;top:942px;">Copy</span>
<div class="o" style="left:601.0px;top:933.0px;width:60.0px;height:30.0px;"></div>
<span class="t " style="left:611.5px;top:942px;">Rename</span>
<div class="o" style="left:666.0px;top:933.0px;width:45.0px;height:30.0px;"></div>
<span class="t " style="left:669.0px;top:942px;">Delete</span>
<div class="cb" style="left:559.0px;top:976.0px;width:12.0px;height:13.0px;"><svg width="12" height="12" viewBox="0 0 12 12" style="position:absolute;left:-1px;top:-1px"><path d="M2.300 6.200 L4.800 9.300 L10 2.300" fill="none" stroke="#000" stroke-width="2.200"/></svg></div>
<svg class="a" style="left:576px;top:975.5px" width="11" height="11" viewBox="0 0 10.500 10.500"><polygon points="0,2.200 2.300,4.500 5.300,0 10.200,4.700 6,8.200 8.100,10.400 0,10.400" fill="#000"/></svg>
<span class="t " style="left:586.0px;top:977px;">Fix Settings Window</span>
<div style="left:0;top:996px;width:1280px;height:28px;background:linear-gradient(#9a9a9a 0,#555 2px,#3c3c3c 4px,#2c2c2c 100%)"></div>
<div style="left:6px;top:996px;width:540px;height:1.3px;background:#111"></div>
<svg class="a" style="left:3px;top:1000px" width="22" height="22" viewBox="0 0 22 22"><path d="M2 2 H14 Q20 2 20 8 V20 H8 Q2 20 2 14Z" fill="#8fc55a" stroke="#e8f4dc" stroke-width="1.6"/><path d="M6 5.500 V12.500 Q6 16 9.500 16 H13.500 Q17 16 17 12.500 V9.500 Q17 7.600 15.200 7.600 Q13.400 7.600 13.400 9.500 V12.500 M13.400 9.500 Q13.400 7.600 11.600 7.600 Q9.800 7.600 9.800 9.500 V12.500" fill="none" stroke="#fff" stroke-width="1.700"/></svg>
<span style="left:27.8px;top:1002.3px;font:bold 12.8px/18px 'Liberation Sans','DejaVu Sans',sans-serif;color:#dcdcdc;white-space:pre;transform:scaleX(0.9755);transform-origin:0 0;">Menu</span>
<svg class="a" style="left:68px;top:998px" width="325" height="26" viewBox="68 998 325 26">
<rect x="71.500" y="1003" width="21" height="17" fill="#8cba5a"/><rect x="71.500" y="1003" width="21" height="3" fill="#c4c4c4"/><rect x="75" y="1015" width="14" height="4" fill="#4a6e2c"/>
<rect x="104" y="1003" width="18" height="18" rx="2" fill="#2a2030" stroke="#d8d8d8" stroke-width="1.500"/><path d="M108 1009 l3 2.500 l-3 2.500 M113 1015 h4" stroke="#fff" stroke-width="1.300" fill="none"/>
<path d="M127.500 1004 h7 l2 2 h10 v14 h-19z" fill="#9cc46a"/><rect x="127.500" y="1007" width="19" height="13" fill="#8ab858"/>
<circle cx="161" cy="1012" r="9.500" fill="#1a9a9c"/><path d="M155 1012 a3 3 0 1 1 6 0 a3 3 0 1 0 6 0 a3 3 0 1 0 -6 0 a3 3 0 1 1 -6 0z" fill="none" stroke="#fff" stroke-width="1.600"/>
<ellipse cx="185" cy="1012" rx="9.500" ry="9" fill="#d8d8d8"/><ellipse cx="186.500" cy="1012" rx="6" ry="4.500" fill="#5a8a4a"/><path d="M177 1016 q8 -12 17 -6" stroke="#444" stroke-width="2" fill="none"/>
<rect x="200" y="1004" width="4" height="15" rx="2" fill="#e0208a"/><rect x="204.500" y="1001" width="5" height="21" rx="2" fill="#3aa040"/><rect x="210" y="1003" width="4" height="17" rx="2" fill="#7a3ab0"/><rect x="214.500" y="1005" width="3.500" height="13" rx="1.500" fill="#2a7ad8"/>
<rect x="224" y="1003" width="19" height="18" rx="2" fill="#4a7ab8"/><path d="M229 1008 l9 9" stroke="#f0b030" stroke-width="3"/><circle cx="229" cy="1007.500" r="2.500" fill="#e8e8e8"/>
<path d="M248.500 1003 h10 v3.500 h-6 v3.500 h5 v3.500 h-5 v7 h-4z" fill="#e02020"/><circle cx="259.500" cy="1015.500" r="5" fill="#3a6ab8" stroke="#3a6ab8" stroke-width="2" stroke-dasharray="2 1.500"/><circle cx="259.500" cy="1015.500" r="2" fill="#2e2e2e"/>
<rect x="272.500" y="1003" width="18" height="18" rx="2" fill="#a4c4e4"/><circle cx="281.500" cy="1013" r="6" fill="#7aa4d8"/><circle cx="281.500" cy="1013" r="2.800" fill="#c8dcf0"/>
<rect x="303" y="1002" width="9" height="7" fill="#2a4ac8" stroke="#d0d0d0"/><rect x="297" y="1012" width="9" height="7" fill="#2a4ac8" stroke="#d0d0d0"/><path d="M309 1005 l-5 6 h4 l-5 6" stroke="#f0e020" stroke-width="2" fill="none"/>
<rect x="320.500" y="1003" width="17.500" height="17.500" rx="1.500" fill="#4aa4d8" stroke="#d8ecf8" stroke-width="1.200"/><path d="M323 1012 h2 l1.500 -5 l2 10 l2 -8 l1.500 5 l1.500 -3 h2" stroke="#fff" stroke-width="1.200" fill="none"/>
<circle cx="352.500" cy="1011.500" r="8" fill="#c8c8c8"/><circle cx="350.500" cy="1009.500" r="3.500" fill="#f4f4f4"/><path d="M345 1017 h15" stroke="#555" stroke-width="2"/><circle cx="361" cy="1016" r="1.500" fill="#e03020"/>
<rect x="369" y="1004" width="14" height="14" rx="3" fill="none" stroke="#f0a020" stroke-width="3"/><rect x="373" y="1007" width="12" height="12" rx="3" fill="none" stroke="#40b4d8" stroke-width="2.500"/>
</svg>
<div style="left:395px;top:999px;width:160px;height:25px;border-radius:3px 3px 0 0;background:linear-gradient(#444,#333);border:1px solid #2a2a2a;border-bottom:0"></div>
<svg class="a" style="left:398px;top:1002px" width="18" height="18" viewBox="0 0 18 18"><rect x="0" y="0" width="18" height="18" rx="2" fill="#a4c4e4"/><circle cx="9" cy="10" r="6" fill="#7aa4d8"/><circle cx="9" cy="10" r="2.800" fill="#c8dcf0"/></svg>
<span style="left:417.4px;top:1001.0px;font:13px/18px 'Liberation Sans','DejaVu Sans',sans-serif;color:#e8e8e8;white-space:pre;transform:scaleX(0.9911);transform-origin:0 0;">Ответить • robofor...</span>
<div style="left:558px;top:1000px;width:160px;height:24px;border-radius:4px 4px 0 0;background:linear-gradient(#6a6a6a,#505050);border:1px solid #787878;border-bottom:0"></div>
<svg class="a" style="left:562px;top:1004px" width="15" height="14" viewBox="0 0 15 14"><rect x=".5" y=".5" width="14" height="13" rx="1.500" fill="#222" stroke="#e8e8e8"/><circle cx="7.500" cy="7" r="3.200" fill="none" stroke="#e02020" stroke-width="1.400"/><path d="M5.300 4.800 l4.400 4.400" stroke="#e02020" stroke-width="1.400"/></svg>
<span style="left:580.3px;top:1001.0px;font:13px/18px 'Liberation Sans','DejaVu Sans',sans-serif;color:#f0f0f0;white-space:pre;transform:scaleX(0.9052);transform-origin:0 0;">KISSlicer v1.6.3 Rele...</span>
<svg class="a" style="left:1000px;top:999.3px" width="280" height="25" viewBox="1000 998 280 25">
<g transform="translate(-5.500,0)"><path d="M1008 1003 l5.500 -1.500 l5.500 1.500 v6 q0 6 -5.500 8.500 q-5.500 -2.500 -5.500 -8.500z" fill="#e8e8e8"/><path d="M1010.500 1010 l2.500 3 l4.500 -6" stroke="#3a8a2a" stroke-width="2" fill="none"/></g>
<rect x="1021" y="1004" width="17" height="12" fill="#f0f0f0"/><path d="M1021 1005.500 h17 M1021 1008.500 h17 M1021 1011.500 h17 M1021 1014.500 h17" stroke="#d02030" stroke-width="1.400"/><rect x="1021" y="1004" width="7" height="6" fill="#2a3a8a"/>
<rect x="1047" y="1004" width="11" height="12" rx="1.500" fill="#444" stroke="#a8a8a8" stroke-width="1.200"/><circle cx="1051.800" cy="1009.200" r="2.300" fill="none" stroke="#c8c8c8" stroke-width="1.200"/><path d="M1053.500 1011 l2.500 3" stroke="#d8d8d8" stroke-width="1.300"/>
<ellipse cx="1071.500" cy="1007.500" rx="3" ry="3.600" fill="#bcbcbc"/><path d="M1065 1017 q1 -4 5 -5 l1.500 -1.500 l1.500 1.500 q4 1 5 5z" fill="#bcbcbc"/>
<path d="M1084 1009.500 q6.500 -5.500 13 0" stroke="#888" stroke-width="1.400" fill="none"/><path d="M1086 1012 q4.500 -4 9 0" stroke="#b0b0b0" stroke-width="1.400" fill="none"/><path d="M1088.300 1014.400 q2.200 -2.200 4.400 0" stroke="#e0e0e0" stroke-width="1.400" fill="none"/><circle cx="1090.500" cy="1016.300" r="1.100" fill="#f0f0f0"/>
<path d="M1263 1009 h3.500 l4 -3.500 v12 l-4 -3.500 h-3.500z" fill="#c8c8c8"/><path d="M1272.500 1007.500 q2.500 4 0 8 M1275 1005.500 q4 6 0 12" stroke="#b0b0b0" stroke-width="1.200" fill="none"/>
</svg>
<span style="left:1103.5px;top:1002.5px;font:bold 12.8px/18px 'Liberation Sans','DejaVu Sans',sans-serif;color:#dcdcdc;white-space:pre;transform:scaleX(0.9707);transform-origin:0 0;">Friday November  2, 20:53</span>
</div>
</body></html>
